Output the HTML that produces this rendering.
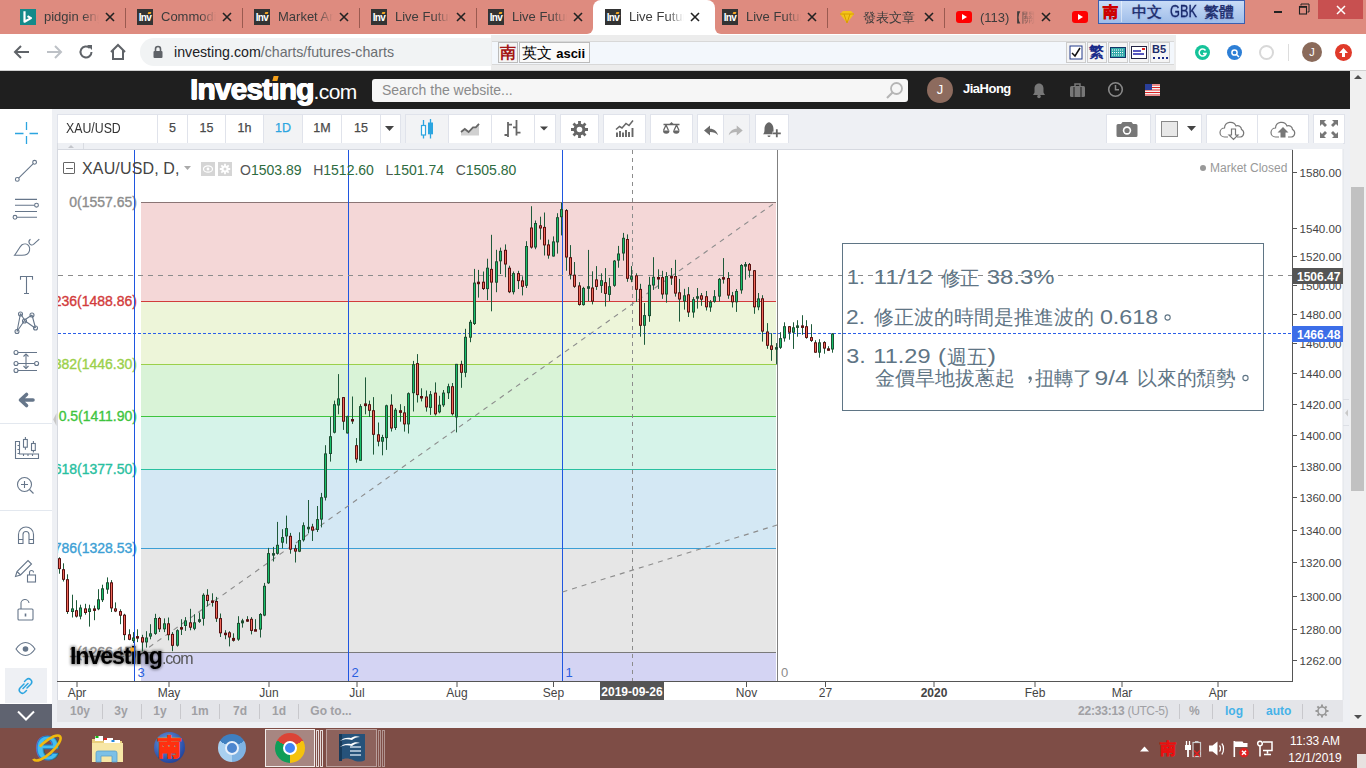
<!DOCTYPE html><html><head><meta charset="utf-8"><style>
*{margin:0;padding:0;box-sizing:border-box}
html,body{width:1366px;height:768px;overflow:hidden;background:#fff;font-family:"Liberation Sans",sans-serif}
.a{position:absolute}
.tab{position:absolute;top:0;height:34px;font-size:12.5px;color:#3c3c3c}
.tabt{position:absolute;top:10px;left:40px;white-space:nowrap;overflow:hidden}
.tx{position:absolute;top:8px;font-size:15px;color:#222}
.sep{position:absolute;top:8px;width:1px;height:20px;background:#9a5a50}
.tb{position:absolute;top:114px;height:30px;background:#fff;border:1px solid #e0e3eb;font-size:12.5px;color:#4a4a4a;text-align:center;line-height:27px;font-weight:normal;-webkit-text-stroke:0.25px currentColor}
svg{position:absolute;overflow:visible}
</style></head><body>

<div class="a" style="left:0;top:0;width:1366px;height:34px;background:#de8b7f"></div>
<div class="a" style="left:587px;top:26px;width:134px;height:8px;background:#fff"></div>
<div class="a" style="left:580px;top:20px;width:13px;height:14px;background:#de8b7f;border-radius:0 0 6px 0"></div>
<div class="a" style="left:715px;top:20px;width:13px;height:14px;background:#de8b7f;border-radius:0 0 0 6px"></div>
<div class="a" style="left:593px;top:0;width:122px;height:34px;background:#fff;border-radius:8px 8px 0 0"></div>
<div class="a" style="left:20px;top:9px;width:16px;height:16px;background:#138a8a"><svg width="16" height="16" style="left:0;top:0"><path d="M4.5 2.2v10.5l6.5-3.6-3.5-2" stroke="#fff" stroke-width="2.2" fill="none" stroke-linejoin="round"/></svg></div>
<div class="tabt a" style="left:44px;top:9px;width:55px;font-size:13px;color:#3c3c3c;-webkit-mask-image:linear-gradient(90deg,#000 70%,transparent)">pidgin eng</div>
<div class="tx" style="left:105px;top:6px"><svg width="10" height="10" style="position:relative;top:2px"><path d="M1 1l8 8M9 1l-8 8" stroke="#222" stroke-width="1.6"/></svg></div>
<div class="sep" style="left:125px"></div>
<div class="a" style="left:137px;top:9px;width:16px;height:16px;background:#333;color:#fff;font-size:10px;font-weight:bold;line-height:18px;text-align:center;letter-spacing:-0.6px;overflow:hidden">Inv<div class="a" style="left:11px;top:3px;width:3px;height:2px;background:#f5a623;transform:skewX(-20deg)"></div></div>
<div class="tabt a" style="left:161px;top:9px;width:55px;font-size:13px;color:#3c3c3c;-webkit-mask-image:linear-gradient(90deg,#000 70%,transparent)">Commodi</div>
<div class="tx" style="left:222px;top:6px"><svg width="10" height="10" style="position:relative;top:2px"><path d="M1 1l8 8M9 1l-8 8" stroke="#222" stroke-width="1.6"/></svg></div>
<div class="sep" style="left:242px"></div>
<div class="a" style="left:254px;top:9px;width:16px;height:16px;background:#333;color:#fff;font-size:10px;font-weight:bold;line-height:18px;text-align:center;letter-spacing:-0.6px;overflow:hidden">Inv<div class="a" style="left:11px;top:3px;width:3px;height:2px;background:#f5a623;transform:skewX(-20deg)"></div></div>
<div class="tabt a" style="left:278px;top:9px;width:55px;font-size:13px;color:#3c3c3c;-webkit-mask-image:linear-gradient(90deg,#000 70%,transparent)">Market An</div>
<div class="tx" style="left:339px;top:6px"><svg width="10" height="10" style="position:relative;top:2px"><path d="M1 1l8 8M9 1l-8 8" stroke="#222" stroke-width="1.6"/></svg></div>
<div class="sep" style="left:359px"></div>
<div class="a" style="left:371px;top:9px;width:16px;height:16px;background:#333;color:#fff;font-size:10px;font-weight:bold;line-height:18px;text-align:center;letter-spacing:-0.6px;overflow:hidden">Inv<div class="a" style="left:11px;top:3px;width:3px;height:2px;background:#f5a623;transform:skewX(-20deg)"></div></div>
<div class="tabt a" style="left:395px;top:9px;width:55px;font-size:13px;color:#3c3c3c;-webkit-mask-image:linear-gradient(90deg,#000 70%,transparent)">Live Futur</div>
<div class="tx" style="left:456px;top:6px"><svg width="10" height="10" style="position:relative;top:2px"><path d="M1 1l8 8M9 1l-8 8" stroke="#222" stroke-width="1.6"/></svg></div>
<div class="sep" style="left:476px"></div>
<div class="a" style="left:488px;top:9px;width:16px;height:16px;background:#333;color:#fff;font-size:10px;font-weight:bold;line-height:18px;text-align:center;letter-spacing:-0.6px;overflow:hidden">Inv<div class="a" style="left:11px;top:3px;width:3px;height:2px;background:#f5a623;transform:skewX(-20deg)"></div></div>
<div class="tabt a" style="left:512px;top:9px;width:55px;font-size:13px;color:#3c3c3c;-webkit-mask-image:linear-gradient(90deg,#000 70%,transparent)">Live Futur</div>
<div class="tx" style="left:573px;top:6px"><svg width="10" height="10" style="position:relative;top:2px"><path d="M1 1l8 8M9 1l-8 8" stroke="#222" stroke-width="1.6"/></svg></div>
<div class="a" style="left:605px;top:9px;width:16px;height:16px;background:#333;color:#fff;font-size:10px;font-weight:bold;line-height:18px;text-align:center;letter-spacing:-0.6px;overflow:hidden">Inv<div class="a" style="left:11px;top:3px;width:3px;height:2px;background:#f5a623;transform:skewX(-20deg)"></div></div>
<div class="tabt a" style="left:629px;top:9px;width:55px;font-size:13px;color:#3c3c3c;-webkit-mask-image:linear-gradient(90deg,#000 70%,transparent)">Live Futur</div>
<div class="tx" style="left:690px;top:6px"><svg width="10" height="10" style="position:relative;top:2px"><path d="M1 1l8 8M9 1l-8 8" stroke="#222" stroke-width="1.6"/></svg></div>
<div class="a" style="left:722px;top:9px;width:16px;height:16px;background:#333;color:#fff;font-size:10px;font-weight:bold;line-height:18px;text-align:center;letter-spacing:-0.6px;overflow:hidden">Inv<div class="a" style="left:11px;top:3px;width:3px;height:2px;background:#f5a623;transform:skewX(-20deg)"></div></div>
<div class="tabt a" style="left:746px;top:9px;width:55px;font-size:13px;color:#3c3c3c;-webkit-mask-image:linear-gradient(90deg,#000 70%,transparent)">Live Futur</div>
<div class="tx" style="left:807px;top:6px"><svg width="10" height="10" style="position:relative;top:2px"><path d="M1 1l8 8M9 1l-8 8" stroke="#222" stroke-width="1.6"/></svg></div>
<div class="sep" style="left:827px"></div>
<svg class="a" style="left:839px;top:9px" width="16" height="16"><path d="M1 5l3-3h8l3 3-7 9z" fill="#f3c41a"/><path d="M1 5h14M5 5l3 9 3-9" stroke="#d89d00" stroke-width="1" fill="none"/></svg>
<div class="tabt a" style="left:863px;top:9px;width:70px;font-size:13px;color:#3c3c3c;-webkit-mask-image:linear-gradient(90deg,#000 70%,transparent)">發表文章</div>
<div class="tx" style="left:924px;top:6px"><svg width="10" height="10" style="position:relative;top:2px"><path d="M1 1l8 8M9 1l-8 8" stroke="#222" stroke-width="1.6"/></svg></div>
<div class="sep" style="left:944px"></div>
<div class="a" style="left:956px;top:11px;width:16px;height:12px;background:#f00;border-radius:3px"><svg width="16" height="12" style="left:0;top:0"><path d="M6 3l5 3-5 3z" fill="#fff"/></svg></div>
<div class="tabt a" style="left:980px;top:9px;width:55px;font-size:13px;color:#3c3c3c;-webkit-mask-image:linear-gradient(90deg,#000 70%,transparent)">(113)【關</div>
<div class="tx" style="left:1041px;top:6px"><svg width="10" height="10" style="position:relative;top:2px"><path d="M1 1l8 8M9 1l-8 8" stroke="#222" stroke-width="1.6"/></svg></div>
<div class="a" style="left:1072px;top:11px;width:16px;height:12px;background:#f00;border-radius:3px"><svg width="16" height="12" style="left:0;top:0"><path d="M6 3l5 3-5 3z" fill="#fff"/></svg></div>
<div class="a" style="left:1098px;top:0;width:147px;height:24px;background:linear-gradient(#c9dcf7,#9fbde9);border:1px solid #3a5fb0"></div>
<div class="a" style="left:1103px;top:3px;width:16px;height:18px;color:#d81010;font-size:15px;font-weight:bold;line-height:18px;-webkit-text-stroke:0.7px #c00">南</div>
<div class="a" style="left:1120.5px;top:1px;width:1px;height:21px;background:rgba(255,255,255,0.5)"></div>
<div class="a" style="left:1132px;top:2px;font-size:15px;color:#1a2a6a;line-height:20px;white-space:nowrap;-webkit-text-stroke:0.4px #1a2a6a;text-shadow:0 1px 2px rgba(60,80,200,0.4)">中文</div>
<div class="a" style="left:1170px;top:2px;font-size:16px;color:#1a2a6a;line-height:20px;white-space:nowrap;-webkit-text-stroke:0.3px #1a2a6a;transform:scaleX(0.8);transform-origin:0 50%;text-shadow:0 1px 2px rgba(60,80,200,0.4)">GBK</div>
<div class="a" style="left:1204px;top:2px;font-size:15px;color:#1a2a6a;line-height:20px;white-space:nowrap;-webkit-text-stroke:0.4px #1a2a6a;text-shadow:0 1px 2px rgba(60,80,200,0.4)">繁體</div>
<div class="a" style="left:1274px;top:11px;width:8px;height:2px;background:#222"></div>
<svg class="a" style="left:1298px;top:3px" width="12" height="12"><path d="M3 2.5V1h8v8H9.5" stroke="#222" stroke-width="1" fill="none"/><rect x="1.5" y="3.5" width="7" height="7.5" stroke="#222" stroke-width="1.1" fill="none"/><path d="M1.5 4h7" stroke="#222" stroke-width="1.6"/></svg>
<div class="a" style="left:1318px;top:0;width:45px;height:19px;background:#c85050"></div>
<svg class="a" style="left:1336px;top:5px" width="10" height="10"><path d="M1 1l8 8M9 1l-8 8" stroke="#fff" stroke-width="1.5"/></svg>
<div class="a" style="left:0;top:34px;width:1366px;height:37px;background:#fff"></div>
<div class="a" style="left:0;top:70px;width:1366px;height:1px;background:#d0d0d0"></div>
<svg class="a" style="left:12px;top:43px" width="20" height="18"><path d="M17 9H3M9 3L3 9l6 6" stroke="#5f6368" stroke-width="2" fill="none"/></svg>
<svg class="a" style="left:44px;top:43px" width="20" height="18"><path d="M3 9h14M11 3l6 6-6 6" stroke="#bdc1c6" stroke-width="2" fill="none"/></svg>
<svg class="a" style="left:77px;top:43px" width="18" height="18"><path d="M14.5 9A5.5 5.5 0 1 1 12.8 5" stroke="#5f6368" stroke-width="2" fill="none"/><path d="M10 2h5v5z" fill="#5f6368"/></svg>
<svg class="a" style="left:108px;top:42px" width="20" height="20"><path d="M3 10L10 3l7 7M5 8v9h10V8" stroke="#5f6368" stroke-width="2" fill="none"/></svg>
<div class="a" style="left:140px;top:38px;width:462px;height:28px;background:#f1f3f4;border-radius:14px"></div>
<svg class="a" style="left:152px;top:45px" width="12" height="14"><rect x="1.5" y="6" width="9" height="7" rx="1" fill="#5f6368"/><path d="M3.5 6V4a2.5 2.5 0 0 1 5 0v2" stroke="#5f6368" stroke-width="1.6" fill="none"/></svg>
<div class="a" style="left:174px;top:44px;font-size:14.2px;color:#202124;white-space:nowrap">investing.com<span style="color:#6b6e72">/charts/futures-charts</span></div>
<div class="a" style="left:491px;top:35px;width:685px;height:35px;background:#ececec"></div>
<div class="a" style="left:492px;top:41px;width:682px;height:24px;background:#f3f7fc;border-top:1px solid #d8d8d8;border-bottom:1px solid #d8d8d8"></div>
<div class="a" style="left:498px;top:42px;width:20px;height:21px;background:#f4f4f4;border:1px solid #bbb;color:#a31515;font-size:16px;font-weight:bold;line-height:19px;text-align:center">南</div>
<div class="a" style="left:519px;top:42px;width:71px;height:21px;background:#fafafa;border:1px solid #bbb;font-size:15px;line-height:19px;color:#000;white-space:nowrap;padding-left:2px">英文 <b style="font-size:13px">ascii</b></div>
<div class="a" style="left:1066px;top:42px;width:20px;height:21px;background:#f4f4f4;border:1px solid #ccc"></div>
<div class="a" style="left:1087px;top:42px;width:20px;height:21px;background:#f4f4f4;border:1px solid #ccc"></div>
<div class="a" style="left:1108px;top:42px;width:20px;height:21px;background:#f4f4f4;border:1px solid #ccc"></div>
<div class="a" style="left:1129px;top:42px;width:20px;height:21px;background:#f4f4f4;border:1px solid #ccc"></div>
<div class="a" style="left:1150px;top:42px;width:20px;height:21px;background:#f4f4f4;border:1px solid #ccc"></div>
<svg class="a" style="left:1069px;top:45px" width="14" height="15"><rect x="1" y="1" width="12" height="13" fill="#fff" stroke="#223a8a"/><path d="M3 8l3 3 5-8" stroke="#111" stroke-width="1.5" fill="none"/></svg>
<div class="a" style="left:1089px;top:43px;font-size:15px;font-weight:bold;color:#1b2b8a;line-height:18px">繁</div>
<svg class="a" style="left:1110px;top:46px" width="16" height="13"><rect x="0.5" y="1.5" width="15" height="10" fill="#3aa" stroke="#136" /><path d="M2 4h12M2 6.5h12M2 9h12" stroke="#fff" stroke-width="1" stroke-dasharray="1 1"/></svg>
<svg class="a" style="left:1131px;top:46px" width="16" height="13"><rect x="0.5" y="0.5" width="15" height="12" fill="#fff" stroke="#224"/><rect x="11" y="2" width="3" height="2" fill="#d22"/><path d="M2 5h8M2 8h11" stroke="#22a" stroke-width="1.5"/></svg>
<div class="a" style="left:1152px;top:42px;font-size:11px;font-weight:bold;color:#1b2b6a;line-height:14px">B5</div>
<div class="a" style="left:1153px;top:57px;width:15px;height:2px;border-top:2px dotted #1b2b8a"></div>
<div class="a" style="left:1195px;top:45px;width:15px;height:15px;border-radius:50%;background:#15c39a"></div>
<svg class="a" style="left:1197px;top:47px" width="11" height="11"><path d="M8.5 3.5A3.5 3.5 0 1 0 9 6.5H6" stroke="#fff" stroke-width="1.6" fill="none"/></svg>
<div class="a" style="left:1227px;top:45px;width:15px;height:15px;border-radius:50%;background:#2d7fd6"></div>
<svg class="a" style="left:1230px;top:48px" width="10" height="10"><circle cx="4.5" cy="4.5" r="2.6" stroke="#fff" stroke-width="1.5" fill="none"/><path d="M6.5 6.5L9 9" stroke="#fff" stroke-width="1.5"/></svg>
<div class="a" style="left:1259px;top:45px;width:15px;height:15px;border-radius:50%;border:2px solid #d8d8d8"></div>
<div class="a" style="left:1288px;top:44px;width:1px;height:17px;background:#ddd"></div>
<div class="a" style="left:1302px;top:42px;width:20px;height:20px;border-radius:50%;background:#8a6a5a;color:#fff;font-size:11px;text-align:center;line-height:20px">J</div>
<div class="a" style="left:1335px;top:44px;width:17px;height:17px;border-radius:50%;background:#e03a2a"></div>
<svg class="a" style="left:1338px;top:47px" width="11" height="11"><path d="M5.5 1L1 6h3v4h3V6h3z" fill="#fff"/></svg>
<div class="a" style="left:0;top:71px;width:1350px;height:38px;background:#1f1f1f"></div>
<div class="a" style="left:190px;top:72px;font-size:30px;font-weight:bold;color:#fff;letter-spacing:-0.9px;white-space:nowrap;line-height:34px;text-shadow:0.6px 0 #fff,-0.6px 0 #fff,0 0.5px #fff">Investing<span style="font-size:21px;font-weight:normal;letter-spacing:-0.6px;text-shadow:none">.com</span></div>
<div class="a" style="left:270px;top:74px;width:10px;height:8px;background:#1f1f1f"></div>
<div class="a" style="left:272.5px;top:76px;width:4.5px;height:5px;background:#f7a21b;transform:skewX(-15deg)"></div>
<div class="a" style="left:372px;top:79px;width:536px;height:23px;background:#f6f6f6;border-radius:3px"></div>
<div class="a" style="left:382px;top:82px;font-size:14px;color:#8a8a8a;white-space:nowrap">Search the website...</div>
<svg class="a" style="left:885px;top:81px" width="20" height="19"><circle cx="11.5" cy="7.5" r="5.5" stroke="#b5b5b5" stroke-width="1.8" fill="none"/><path d="M7.5 11.5L2 17" stroke="#b5b5b5" stroke-width="2.2"/></svg>
<div class="a" style="left:927px;top:77px;width:26px;height:26px;border-radius:50%;background:#8d6b5e;color:#fff;font-size:13px;text-align:center;line-height:26px">J</div>
<div class="a" style="left:963px;top:81px;font-size:13px;font-weight:bold;color:#fff;white-space:nowrap;letter-spacing:-0.5px">JiaHong</div>
<svg class="a" style="left:1031px;top:82px" width="16" height="17"><path d="M8 1.5c-3 0-4.5 2.5-4.5 5v4L2 13h12l-1.5-2.5v-4c0-2.5-1.5-5-4.5-5z" fill="#777"/><circle cx="8" cy="14.5" r="1.8" fill="#777"/></svg>
<svg class="a" style="left:1069px;top:82px" width="17" height="16"><rect x="1" y="4" width="15" height="11" rx="1.5" fill="#777"/><path d="M6 4V2h5v2" stroke="#777" stroke-width="1.5" fill="none"/><path d="M5 5v10M12 5v10" stroke="#1f1f1f" stroke-width="1"/></svg>
<svg class="a" style="left:1107px;top:81px" width="17" height="17"><circle cx="8.5" cy="8.5" r="6.8" stroke="#888" stroke-width="1.6" fill="none"/><path d="M8.5 4v4.8h3.5" stroke="#888" stroke-width="1.5" fill="none"/></svg>
<svg class="a" style="left:1145px;top:84px" width="15" height="12"><rect width="15" height="12" fill="#f4f4f4"/><path d="M0 1h15M0 3.5h15M0 6h15M0 8.5h15M0 11h15" stroke="#d22" stroke-width="1.1"/><rect width="7" height="6" fill="#2a3f9a"/></svg>
<div class="a" style="left:1350px;top:71px;width:16px;height:657px;background:#f0f0f0"></div>
<svg class="a" style="left:1353px;top:73px" width="10" height="8"><path d="M1 6l4-4 4 4z" fill="#505050"/></svg>
<svg class="a" style="left:1353px;top:713px" width="10" height="8"><path d="M1 2l4 4 4-4z" fill="#505050"/></svg>
<div class="a" style="left:1351px;top:187px;width:13px;height:304px;background:#c1c1c1"></div>
<div class="a" style="left:0;top:109px;width:1350px;height:619px;background:#eef0f4"></div>
<svg class="a" style="left:52px;top:412px" width="6" height="15"><path d="M4.5 1L1.2 7.5 4.5 14z" fill="#c8c8c8"/></svg>
<div class="a" style="left:0;top:109px;width:52px;height:595px;background:#fff"></div>
<div class="a" style="left:5px;top:668px;width:42px;height:35px;background:#eef0f4"></div>
<div class="a" style="left:0;top:704px;width:52px;height:24px;background:#5f6370"></div>
<svg class="a" style="left:17px;top:710px" width="18" height="11"><path d="M1 1.5l8 8 8-8" stroke="#fff" stroke-width="2" fill="none"/></svg>
<div class="a" style="left:0;top:423px;width:52px;height:1px;background:#e3e8ef"></div>
<div class="a" style="left:0;top:510px;width:52px;height:1px;background:#e3e8ef"></div>
<svg class="a" style="left:0;top:109px" width="52" height="595" viewBox="0 109 52 595">
<g stroke="#2ca5e0" stroke-width="1.3" fill="none"><path d="M26.5 122v8M26.5 136v8M15 133.5h8.5M29.5 133.5h8.5"/></g>
<g stroke="#66768a" stroke-width="1.1" fill="none">
<path d="M18.6 178.1L33.3 163.6"/><circle cx="17.3" cy="179.4" r="1.9"/><circle cx="34.6" cy="162.3" r="1.9"/>
<path d="M15 199.4h22M15 205.2h19.5M15 211.5h22M17 217.3h20"/><circle cx="36.5" cy="205.2" r="1.9"/><circle cx="15" cy="217.3" r="1.9"/>
<path d="M14.5 255.3c3-3.5 5-8.5 7.5-10.5 2.5-1.5 5.5-1 7 1.5 1.5 2.5 0.5 6.5-2 8-1.5 1-3 1-5 1z"/><path d="M30.5 239.3c-1.5 1-2 2.5-1.2 4 1 1.8 2.8 2.2 4.2 1l5.8-5.2"/>
<path d="M20.5 279.8v-3.3h12v3.3M26.5 276.5v17M24 293.5h5"/>
<path d="M20.5 313.5L17 331.5M20.5 313.5l4 6.5M32 315l-7.5 5M32 315l3.5 13M24.5 320.5l10.5 7.5M24.5 320.5L17 331.5"/>
<circle cx="20.5" cy="314" r="2"/><circle cx="32" cy="315" r="2"/><circle cx="24.5" cy="321" r="2"/><circle cx="17" cy="331.5" r="2"/><circle cx="35.5" cy="328" r="2"/>
<path d="M18 352.5h19M18 363.5h16.6M18 370.5h19M26 354v14.5"/><circle cx="16" cy="352.5" r="2"/><circle cx="16" cy="363.5" r="2"/><circle cx="16" cy="370.5" r="2"/><circle cx="36.6" cy="363.5" r="2"/>
<path d="M23.5 356.5l2.5-2.5 2.5 2.5M23.5 366l2.5 2.5 2.5-2.5"/>
<path d="M15.5 441.5v17h23v-4.5h-19v-12.5z"/><path d="M19.5 445.5h-2M19.5 449.5h-2M19.5 453.5h-2M23.5 454v2M28 454v2M32.5 454v2"/>
<rect x="23.5" y="439.5" width="3.8" height="7.7"/><rect x="31.5" y="443.5" width="3.8" height="7"/><path d="M25.4 437v2.5M25.4 447.2v2.5M33.4 441v2.5M33.4 450.5v2"/>
<circle cx="24.5" cy="484.5" r="7"/><path d="M21 484.5h7M24.5 481v7M29.5 489.5l4 4"/>
<path d="M18.5 543.5v-9a7.5 7.5 0 0 1 15 0v9h-4.5v-9a3 3 0 0 0-6 0v9z"/><path d="M18.5 539.5h4.5M29 539.5h4.5"/>
<path d="M15.5 576.5l1.5-5 11-11 3.5 3.5-11 11z M17 571.5l3.5 3.5"/><rect x="27.5" y="575" width="8" height="7"/><path d="M29.5 575v-2.5a2 2 0 0 1 4 0"/>
<rect x="18" y="609" width="15" height="11" rx="1"/><path d="M21 609v-5a4 4 0 0 1 8 -1"/><path d="M25.5 613.5v3" stroke-width="1.6"/>
<path d="M16 649c3-4.5 6-6.5 9.5-6.5s6.5 2 9.5 6.5c-3 4.5-6 6.5-9.5 6.5s-6.5-2-9.5-6.5z"/>
</g>
<circle cx="25.5" cy="649" r="2.8" fill="#66768a"/>
<path d="M33 400h-11M26.5 394.5l-6 5.5 6 5.5" stroke="#66768a" stroke-width="3.6" fill="none" stroke-linejoin="round" stroke-linecap="round"/>
<g stroke="#2ca5e0" stroke-width="1.5" fill="none" stroke-linecap="round"><path d="M23 688.5l5-5"/><path d="M24.5 681.5l2-2a3.2 3.2 0 0 1 4.5 4.5l-4 4"/><path d="M26.5 690.5l-2 2a3.2 3.2 0 0 1-4.5-4.5l4-4"/></g>
</svg>
<div class="tb" style="left:57px;width:101px;text-align:left;padding-left:8px;font-size:14px;font-weight:normal;color:#333;-webkit-text-stroke:0"><span style="display:inline-block;transform:scaleX(0.88);transform-origin:0 50%">XAU/USD</span></div>
<div class="tb" style="left:157px;width:31px;background:#fff;color:#4a4a4a;">5</div>
<div class="tb" style="left:187px;width:39px;background:#fff;color:#4a4a4a;">15</div>
<div class="tb" style="left:225px;width:39px;background:#fff;color:#4a4a4a;">1h</div>
<div class="tb" style="left:263px;width:40px;background:#f2f3f5;color:#2ca5e0;">1D</div>
<div class="tb" style="left:302px;width:40px;background:#fff;color:#4a4a4a;">1M</div>
<div class="tb" style="left:341px;width:40px;background:#fff;color:#4a4a4a;">15</div>
<div class="tb" style="left:380px;width:21px;background:#fff;color:#4a4a4a;"></div>
<svg class="a" style="left:385px;top:126px" width="10" height="6"><path d="M0 0h9l-4.5 5z" fill="#444"/></svg>
<div class="tb" style="left:405px;width:44px;background:#f2f3f5;color:#444;"></div>
<div class="tb" style="left:448px;width:44px;background:#fff;color:#444;"></div>
<div class="tb" style="left:491px;width:44px;background:#fff;color:#444;"></div>
<div class="tb" style="left:534px;width:22px;background:#fff;color:#444;"></div>
<div class="tb" style="left:560px;width:39px;background:#fff;color:#444;"></div>
<div class="tb" style="left:603px;width:43px;background:#fff;color:#444;"></div>
<div class="tb" style="left:650px;width:43px;background:#fff;color:#444;"></div>
<div class="tb" style="left:697px;width:27px;background:#fff;color:#444;"></div>
<div class="tb" style="left:723px;width:27px;background:#f2f3f5;color:#444;"></div>
<div class="tb" style="left:755px;width:34px;background:#fff;color:#444;"></div>
<div class="tb" style="left:1106px;width:45px;background:#fff;color:#444;"></div>
<div class="tb" style="left:1155px;width:47px;background:#fff;color:#444;"></div>
<div class="tb" style="left:1206px;width:52px;background:#fff;color:#444;"></div>
<div class="tb" style="left:1257px;width:52px;background:#fff;color:#444;"></div>
<div class="tb" style="left:1313px;width:32px;background:#fff;color:#444;"></div>
<svg class="a" style="left:540px;top:126px" width="9" height="6"><path d="M0 0.5h8l-4 4z" fill="#444"/></svg>
<svg class="a" style="left:1187px;top:126px" width="10" height="6"><path d="M0 0h9l-4.5 5z" fill="#444"/></svg>
<svg class="a" style="left:0;top:109px" width="1366" height="40" viewBox="0 109 1366 40">
<path d="M423.5 120v18.5M430.5 119v19.5" stroke="#2ca5e0" stroke-width="1.3"/><rect x="421.5" y="125.5" width="4" height="9.5" fill="#fff" stroke="#2ca5e0" stroke-width="1.2"/><rect x="428" y="122.5" width="5" height="11.8" fill="#2ca5e0"/>
<path d="M461 135.6v-3.6l3.8-3 3.8 3 4.4-4.6 2.8 0 3.2-3.5v11.7z" fill="#d0d0d0"/><path d="M461 132l3.8-3 3.8 3 4.4-4.6h2.8l3.2-3.5" stroke="#666" stroke-width="1.8" fill="none"/>
<path d="M508 122v15M504.5 135h3.5M508 124.6h4M516.5 120v15.5M513 127.3h3.5M516.5 132.7h4" stroke="#666" stroke-width="1.8" fill="none"/>
<g transform="translate(579.5 129.5)"><circle r="6" fill="#666"/><circle r="2.8" fill="#fff"/><g stroke="#666" stroke-width="2.8"><path d="M0 -8.5v3M0 5.5v3M-8.5 0h3M5.5 0h3M-6 -6l2.2 2.2M3.8 3.8l2.2 2.2M-6 6l2.2 -2.2M3.8 -3.8l2.2 -2.2"/></g></g>
<path d="M617 137v-4.5M620 137v-6M623 137v-4.5M626 137v-7M629 137v-5M632.5 137v-9" stroke="#666" stroke-width="1.9" fill="none"/><path d="M616 129.5l3.5-3 2.5 1.5 4-4.5 3 2 4-5" stroke="#666" stroke-width="1.5" fill="none"/>
<g stroke="#666" stroke-width="1.3" fill="none"><path d="M663.5 124.5h16M666 125l-2.5 5.5M666 125l2.5 5.5M676.5 125l-2.5 5.5M676.5 125l2.5 5.5"/></g><path d="M669.5 124l2-2 2 2z" fill="#666"/><path d="M663 130.5h6.5a3.25 3.25 0 0 1-6.5 0zM673 130.5h6.5a3.25 3.25 0 0 1-6.5 0z" fill="#666"/>
<path d="M704 130.5l6-5v3.2c4 0 7 2.5 8 6.5-2-2.2-4.5-3.2-8-3.2v3.5z" fill="#6a6a6a"/>
<path d="M742.7 130.5l-6-5v3.2c-4 0-7 2.5-8 6.5 2-2.2 4.5-3.2 8-3.2v3.5z" fill="#b5b5b5"/>
<path d="M763 134.3c1-1 1.5-2 1.5-5 0-4 2-6.5 4.5-7h0c2.5 0.5 4.5 3 4.5 7v1.5l1 3.5z" fill="#666"/><path d="M767.5 135.5h3a1.5 1.5 0 0 1-3 0z" fill="#666"/><path d="M772.5 133.3h8M776.5 129.3v8" stroke="#fff" stroke-width="3.5"/><path d="M772.8 133.3h8M776.8 129.3v8" stroke="#666" stroke-width="1.8"/>
<path d="M1118 124h3l1.5-2h9l1.5 2h3a1.5 1.5 0 0 1 1.5 1.5v10a1.5 1.5 0 0 1-1.5 1.5h-18a1.5 1.5 0 0 1-1.5-1.5v-10a1.5 1.5 0 0 1 1.5-1.5z" fill="#777"/><circle cx="1127" cy="130.5" r="4.2" fill="#fff"/><circle cx="1127" cy="130.5" r="2.6" fill="#777"/>
<rect x="1161.5" y="121.5" width="16" height="15" fill="#e8e8e8" stroke="#888"/>
<g transform="translate(4 0)"><g fill="none" stroke="#777" stroke-width="1.2"><path d="M1224 137h-3.5a4.5 4.5 0 0 1 0-9 6 6 0 0 1 11.5-2 4 4 0 0 1 5.5 3.5 4 4 0 0 1-1 7.5h-3.5"/><path d="M1227.5 129v6h-2.5l4.5 4.5 4.5-4.5h-2.5v-6z"/></g>
<g fill="none" stroke="#777" stroke-width="1.2"><path d="M1275 137h-3.5a4.5 4.5 0 0 1 0-9 6 6 0 0 1 11.5-2 4 4 0 0 1 5.5 3.5 4 4 0 0 1-1 7.5h-3.5"/></g><path d="M1276.5 137.5v-5h-3l5.5-5.5 5.5 5.5h-3v5z" fill="#777"/></g>
<g fill="#777"><path d="M1320 120l6 0-2 2 3 3-2 2-3-3-2 2zM1338 120v6l-2-2-3 3-2-2 3-3-2-2zM1320 138v-6l2 2 3-3 2 2-3 3 2 2zM1338 138h-6l2-2-3-3 2-2 3 3 2-2z"/></g>
</svg>
<div class="a" style="left:57px;top:143px;width:1286px;height:7px;background:#eef0f4;border-left:1px solid #d9dce2"></div>
<div class="a" style="left:83px;top:143px;width:1px;height:7px;background:#d9dce2"></div>
<svg class="a" style="left:67px;top:144px" width="8" height="5"><path d="M1 4l3-3 3 3z" fill="#c4c6cb"/></svg>
<svg class="a" style="left:57px;top:149px" width="1286" height="551" viewBox="57 149 1286 551">
<rect x="57" y="149" width="1286" height="551" fill="#fff"/>
<path d="M57.5 149v551" stroke="#d6d9e0"/>
<path d="M57 149.5h1236" stroke="#d6d9e0"/>
<path d="M1343 149v551" stroke="#e0e3e8"/>
<clipPath id="pl"><rect x="58" y="150" width="1234" height="531"/></clipPath>
<g clip-path="url(#pl)">
<rect x="141" y="202" width="635" height="99" fill="#f4d7d7"/>
<rect x="141" y="301" width="635" height="63" fill="#edf5d9"/>
<rect x="141" y="364" width="635" height="52" fill="#d9f3d7"/>
<rect x="141" y="416" width="635" height="53" fill="#d6f3e9"/>
<rect x="141" y="469" width="635" height="79" fill="#d4e8f4"/>
<rect x="141" y="548" width="635" height="105" fill="#e6e6e6"/>
<rect x="141" y="653" width="635" height="28" fill="#d4d4f3"/>
<path d="M141 202.5h635" stroke="#8a7575"/>
<path d="M141 301.5h635" stroke="#d23b3b"/>
<path d="M141 364.5h635" stroke="#9bd04a"/>
<path d="M141 416.5h635" stroke="#3ec43e"/>
<path d="M141 469.5h635" stroke="#28c0a0"/>
<path d="M141 548.5h635" stroke="#3c9fd5"/>
<path d="M141 652.5h635" stroke="#7a7a7a"/>
<text x="137" y="207.0" text-anchor="end" font-size="14" fill="#8c8c8c" stroke="#8c8c8c" stroke-width="0.35" font-family="Liberation Sans">0(1557.65)</text>
<text x="137" y="306.0" text-anchor="end" font-size="14" fill="#d23b3b" stroke="#d23b3b" stroke-width="0.35" font-family="Liberation Sans">0.236(1488.86)</text>
<text x="137" y="369.0" text-anchor="end" font-size="14" fill="#9bd04a" stroke="#9bd04a" stroke-width="0.35" font-family="Liberation Sans">0.382(1446.30)</text>
<text x="137" y="421.0" text-anchor="end" font-size="14" fill="#3ec43e" stroke="#3ec43e" stroke-width="0.35" font-family="Liberation Sans">0.5(1411.90)</text>
<text x="137" y="474.0" text-anchor="end" font-size="14" fill="#28c0a0" stroke="#28c0a0" stroke-width="0.35" font-family="Liberation Sans">0.618(1377.50)</text>
<text x="137" y="553.0" text-anchor="end" font-size="14" fill="#3c9fd5" stroke="#3c9fd5" stroke-width="0.35" font-family="Liberation Sans">0.786(1328.53)</text>
<text x="137" y="657.0" text-anchor="end" font-size="14" fill="#8c8c8c" stroke="#8c8c8c" stroke-width="0.35" font-family="Liberation Sans">1(1266.15)</text>
<filter id="wmb" x="-10%" y="-30%" width="120%" height="160%"><feGaussianBlur stdDeviation="1.6"/></filter>
<text x="70" y="664" font-size="23.2" font-weight="bold" fill="#000" fill-opacity="0.35" stroke="#000" stroke-opacity="0.35" stroke-width="2" font-family="Liberation Sans" letter-spacing="-1.1" filter="url(#wmb)">Investing</text>
<text x="70" y="664" font-size="23.2" font-weight="bold" fill="#000" font-family="Liberation Sans" letter-spacing="-1.1" style="filter:blur(0.5px)">Investing<tspan font-size="16" font-weight="normal" fill="#555" letter-spacing="-1">.com</tspan></text>
<rect x="130.5" y="647.5" width="4" height="4" fill="#f5a623"/>
<path d="M134.5 150v531" stroke="#1f56e0" stroke-width="1"/>
<text x="137.5" y="677" font-size="13" fill="#2a5fe0" font-family="Liberation Sans">3</text>
<path d="M348.5 150v531" stroke="#1f56e0" stroke-width="1"/>
<text x="351.5" y="677" font-size="13" fill="#2a5fe0" font-family="Liberation Sans">2</text>
<path d="M562.5 150v531" stroke="#1f56e0" stroke-width="1"/>
<text x="565.5" y="677" font-size="13" fill="#2a5fe0" font-family="Liberation Sans">1</text>
<path d="M777.5 150v531" stroke="#808080"/>
<text x="781" y="677" font-size="13" fill="#8c8c8c" font-family="Liberation Sans">0</text>
<path d="M141 653L776 202" stroke="#8c8c8c" stroke-dasharray="5 5" stroke-width="1.1"/>
<path d="M562.5 592L777 525" stroke="#8c8c8c" stroke-dasharray="5 5" stroke-width="1.1"/>
<path d="M632.5 150v531" stroke="#8c8c8c" stroke-dasharray="4 4"/>
<path d="M58 275.5h1234" stroke="#8c8c8c" stroke-dasharray="5 5"/>
<path d="M58 333.5h1234" stroke="#2b5fe8" stroke-dasharray="3 2"/>
<rect x="59" y="557.3" width="1" height="16.4" fill="#1e5a3a"/>
<rect x="58" y="558.2" width="3" height="10.9" fill="#5a0f0f"/>
<rect x="59" y="559.2" width="1" height="8.9" fill="#f0685a"/>
<rect x="63" y="563.3" width="1" height="18.2" fill="#1e5a3a"/>
<rect x="62" y="569.2" width="3" height="10.6" fill="#5a0f0f"/>
<rect x="63" y="570.2" width="1" height="8.6" fill="#f0685a"/>
<rect x="67" y="574.3" width="1" height="39.6" fill="#1e5a3a"/>
<rect x="66" y="579.2" width="3" height="32.8" fill="#5a0f0f"/>
<rect x="67" y="580.2" width="1" height="30.8" fill="#f0685a"/>
<rect x="72" y="594.7" width="1" height="22.8" fill="#1e5a3a"/>
<rect x="71" y="608.4" width="3" height="3.6" fill="#1f4f33"/>
<rect x="72" y="609.4" width="1" height="1.6" fill="#17c06a"/>
<rect x="76" y="600.2" width="1" height="17.3" fill="#1e5a3a"/>
<rect x="75" y="610.2" width="3" height="6.4" fill="#5a0f0f"/>
<rect x="76" y="611.2" width="1" height="4.4" fill="#f0685a"/>
<rect x="80" y="604.7" width="1" height="14.6" fill="#1e5a3a"/>
<rect x="79" y="607.5" width="3" height="9.1" fill="#1f4f33"/>
<rect x="80" y="608.5" width="1" height="7.1" fill="#17c06a"/>
<rect x="85" y="603.8" width="1" height="10.9" fill="#1e5a3a"/>
<rect x="84" y="608.4" width="3" height="4.6" fill="#5a0f0f"/>
<rect x="85" y="609.4" width="1" height="2.6" fill="#f0685a"/>
<rect x="89" y="604.7" width="1" height="21.9" fill="#1e5a3a"/>
<rect x="88" y="608.4" width="3" height="3.6" fill="#1f4f33"/>
<rect x="89" y="609.4" width="1" height="1.6" fill="#17c06a"/>
<rect x="94" y="605.6" width="1" height="14.6" fill="#1e5a3a"/>
<rect x="93" y="608.4" width="3" height="2.5" fill="#5a0f0f"/>
<rect x="98" y="589.2" width="1" height="21.0" fill="#1e5a3a"/>
<rect x="97" y="599.3" width="3" height="10.0" fill="#1f4f33"/>
<rect x="98" y="600.3" width="1" height="8.0" fill="#17c06a"/>
<rect x="102" y="584.7" width="1" height="17.3" fill="#1e5a3a"/>
<rect x="101" y="588.3" width="3" height="11.9" fill="#1f4f33"/>
<rect x="102" y="589.3" width="1" height="9.9" fill="#17c06a"/>
<rect x="107" y="577.4" width="1" height="16.4" fill="#1e5a3a"/>
<rect x="106" y="582.3" width="3" height="7.3" fill="#1f4f33"/>
<rect x="107" y="583.3" width="1" height="5.3" fill="#17c06a"/>
<rect x="111" y="580.1" width="1" height="31.9" fill="#1e5a3a"/>
<rect x="110" y="582.3" width="3" height="26.1" fill="#5a0f0f"/>
<rect x="111" y="583.3" width="1" height="24.1" fill="#f0685a"/>
<rect x="115" y="602.4" width="1" height="9.7" fill="#1e5a3a"/>
<rect x="114" y="608.4" width="3" height="3.1" fill="#5a0f0f"/>
<rect x="115" y="609.4" width="1" height="1.1" fill="#f0685a"/>
<rect x="120" y="609.3" width="1" height="14.9" fill="#1e5a3a"/>
<rect x="119" y="611.1" width="3" height="4.6" fill="#5a0f0f"/>
<rect x="120" y="612.1" width="1" height="2.6" fill="#f0685a"/>
<rect x="124" y="613.8" width="1" height="26.4" fill="#1e5a3a"/>
<rect x="123" y="614.7" width="3" height="20.4" fill="#5a0f0f"/>
<rect x="124" y="615.7" width="1" height="18.4" fill="#f0685a"/>
<rect x="129" y="629.3" width="1" height="10.9" fill="#1e5a3a"/>
<rect x="128" y="634.3" width="3" height="5.5" fill="#5a0f0f"/>
<rect x="129" y="635.3" width="1" height="3.5" fill="#f0685a"/>
<rect x="133" y="632.1" width="1" height="10.9" fill="#1e5a3a"/>
<rect x="132" y="637.5" width="3" height="3.6" fill="#1f4f33"/>
<rect x="133" y="638.5" width="1" height="1.6" fill="#17c06a"/>
<rect x="137" y="629.3" width="1" height="12.8" fill="#1e5a3a"/>
<rect x="136" y="636.1" width="3" height="2.5" fill="#5a0f0f"/>
<rect x="142" y="634.8" width="1" height="16.4" fill="#1e5a3a"/>
<rect x="141" y="637.2" width="3" height="5.3" fill="#5a0f0f"/>
<rect x="142" y="638.2" width="1" height="3.3" fill="#f0685a"/>
<rect x="146" y="631.2" width="1" height="16.4" fill="#1e5a3a"/>
<rect x="145" y="637.5" width="3" height="4.9" fill="#1f4f33"/>
<rect x="146" y="638.5" width="1" height="2.9" fill="#17c06a"/>
<rect x="150" y="624.2" width="1" height="15.1" fill="#1e5a3a"/>
<rect x="149" y="633.3" width="3" height="3.3" fill="#1f4f33"/>
<rect x="150" y="634.3" width="1" height="1.3" fill="#17c06a"/>
<rect x="155" y="613.8" width="1" height="21.0" fill="#1e5a3a"/>
<rect x="154" y="618.0" width="3" height="15.9" fill="#1f4f33"/>
<rect x="155" y="619.0" width="1" height="13.9" fill="#17c06a"/>
<rect x="159" y="616.9" width="1" height="15.1" fill="#1e5a3a"/>
<rect x="158" y="618.0" width="3" height="11.3" fill="#5a0f0f"/>
<rect x="159" y="619.0" width="1" height="9.3" fill="#f0685a"/>
<rect x="164" y="618.4" width="1" height="13.7" fill="#1e5a3a"/>
<rect x="163" y="623.3" width="3" height="6.0" fill="#1f4f33"/>
<rect x="164" y="624.3" width="1" height="4.0" fill="#17c06a"/>
<rect x="168" y="617.5" width="1" height="22.8" fill="#1e5a3a"/>
<rect x="167" y="623.3" width="3" height="11.9" fill="#5a0f0f"/>
<rect x="168" y="624.3" width="1" height="9.9" fill="#f0685a"/>
<rect x="172" y="632.1" width="1" height="19.1" fill="#1e5a3a"/>
<rect x="171" y="633.9" width="3" height="11.9" fill="#5a0f0f"/>
<rect x="172" y="634.9" width="1" height="9.9" fill="#f0685a"/>
<rect x="177" y="629.3" width="1" height="17.3" fill="#1e5a3a"/>
<rect x="176" y="630.2" width="3" height="15.5" fill="#1f4f33"/>
<rect x="177" y="631.2" width="1" height="13.5" fill="#17c06a"/>
<rect x="181" y="619.2" width="1" height="15.8" fill="#1e5a3a"/>
<rect x="180" y="627.1" width="3" height="2.5" fill="#5a0f0f"/>
<rect x="185" y="617.1" width="1" height="13.8" fill="#1e5a3a"/>
<rect x="184" y="620.4" width="3" height="5.6" fill="#1f4f33"/>
<rect x="185" y="621.4" width="1" height="3.6" fill="#17c06a"/>
<rect x="190" y="608.8" width="1" height="21.5" fill="#1e5a3a"/>
<rect x="189" y="622.3" width="3" height="5.4" fill="#5a0f0f"/>
<rect x="190" y="623.3" width="1" height="3.4" fill="#f0685a"/>
<rect x="194" y="614.2" width="1" height="16.0" fill="#1e5a3a"/>
<rect x="193" y="622.3" width="3" height="6.5" fill="#1f4f33"/>
<rect x="194" y="623.3" width="1" height="4.5" fill="#17c06a"/>
<rect x="199" y="612.5" width="1" height="10.4" fill="#1e5a3a"/>
<rect x="198" y="619.2" width="3" height="2.7" fill="#1f4f33"/>
<rect x="203" y="593.3" width="1" height="32.3" fill="#1e5a3a"/>
<rect x="202" y="594.8" width="3" height="24.0" fill="#1f4f33"/>
<rect x="203" y="595.8" width="1" height="22.0" fill="#17c06a"/>
<rect x="207" y="589.2" width="1" height="17.1" fill="#1e5a3a"/>
<rect x="206" y="594.8" width="3" height="6.2" fill="#5a0f0f"/>
<rect x="207" y="595.8" width="1" height="4.2" fill="#f0685a"/>
<rect x="212" y="593.3" width="1" height="13.3" fill="#1e5a3a"/>
<rect x="211" y="600.4" width="3" height="2.5" fill="#5a0f0f"/>
<rect x="216" y="596.9" width="1" height="25.0" fill="#1e5a3a"/>
<rect x="215" y="601.0" width="3" height="17.7" fill="#5a0f0f"/>
<rect x="216" y="602.0" width="1" height="15.7" fill="#f0685a"/>
<rect x="220" y="613.5" width="1" height="23.5" fill="#1e5a3a"/>
<rect x="219" y="618.1" width="3" height="15.2" fill="#5a0f0f"/>
<rect x="220" y="619.1" width="1" height="13.2" fill="#f0685a"/>
<rect x="225" y="630.2" width="1" height="9.0" fill="#1e5a3a"/>
<rect x="224" y="632.7" width="3" height="2.5" fill="#5a0f0f"/>
<rect x="229" y="631.2" width="1" height="15.2" fill="#1e5a3a"/>
<rect x="228" y="632.3" width="3" height="5.2" fill="#5a0f0f"/>
<rect x="229" y="633.3" width="1" height="3.2" fill="#f0685a"/>
<rect x="233" y="633.3" width="1" height="8.3" fill="#1e5a3a"/>
<rect x="232" y="637.9" width="3" height="2.9" fill="#5a0f0f"/>
<rect x="238" y="616.2" width="1" height="24.6" fill="#1e5a3a"/>
<rect x="237" y="622.9" width="3" height="16.7" fill="#1f4f33"/>
<rect x="238" y="623.9" width="1" height="14.7" fill="#17c06a"/>
<rect x="242" y="618.8" width="1" height="8.8" fill="#1e5a3a"/>
<rect x="241" y="620.4" width="3" height="2.9" fill="#1f4f33"/>
<rect x="247" y="616.2" width="1" height="5.6" fill="#1e5a3a"/>
<rect x="246" y="619.2" width="3" height="2.5" fill="#5a0f0f"/>
<rect x="251" y="617.1" width="1" height="17.3" fill="#1e5a3a"/>
<rect x="250" y="618.8" width="3" height="12.1" fill="#5a0f0f"/>
<rect x="251" y="619.8" width="1" height="10.1" fill="#f0685a"/>
<rect x="255" y="619.2" width="1" height="11.7" fill="#1e5a3a"/>
<rect x="254" y="629.2" width="3" height="2.5" fill="#5a0f0f"/>
<rect x="260" y="613.1" width="1" height="24.4" fill="#1e5a3a"/>
<rect x="259" y="614.0" width="3" height="15.6" fill="#1f4f33"/>
<rect x="260" y="615.0" width="1" height="13.6" fill="#17c06a"/>
<rect x="264" y="582.9" width="1" height="33.3" fill="#1e5a3a"/>
<rect x="263" y="585.8" width="3" height="29.8" fill="#1f4f33"/>
<rect x="264" y="586.8" width="1" height="27.8" fill="#17c06a"/>
<rect x="268" y="547.9" width="1" height="36.0" fill="#1e5a3a"/>
<rect x="267" y="553.1" width="3" height="30.2" fill="#1f4f33"/>
<rect x="268" y="554.1" width="1" height="28.2" fill="#17c06a"/>
<rect x="273" y="546.9" width="1" height="14.6" fill="#1e5a3a"/>
<rect x="272" y="553.1" width="3" height="2.5" fill="#1f4f33"/>
<rect x="277" y="521.9" width="1" height="32.7" fill="#1e5a3a"/>
<rect x="276" y="544.8" width="3" height="9.0" fill="#1f4f33"/>
<rect x="277" y="545.8" width="1" height="7.0" fill="#17c06a"/>
<rect x="282" y="529.2" width="1" height="19.2" fill="#1e5a3a"/>
<rect x="281" y="537.1" width="3" height="5.6" fill="#1f4f33"/>
<rect x="282" y="538.1" width="1" height="3.6" fill="#17c06a"/>
<rect x="286" y="515.6" width="1" height="28.1" fill="#1e5a3a"/>
<rect x="285" y="528.1" width="3" height="8.3" fill="#1f4f33"/>
<rect x="286" y="529.1" width="1" height="6.3" fill="#17c06a"/>
<rect x="290" y="532.9" width="1" height="20.8" fill="#1e5a3a"/>
<rect x="289" y="535.8" width="3" height="13.8" fill="#5a0f0f"/>
<rect x="290" y="536.8" width="1" height="11.8" fill="#f0685a"/>
<rect x="295" y="544.8" width="1" height="17.7" fill="#1e5a3a"/>
<rect x="294" y="548.3" width="3" height="3.3" fill="#5a0f0f"/>
<rect x="295" y="549.3" width="1" height="1.3" fill="#f0685a"/>
<rect x="299" y="532.3" width="1" height="19.8" fill="#1e5a3a"/>
<rect x="298" y="540.0" width="3" height="11.7" fill="#1f4f33"/>
<rect x="299" y="541.0" width="1" height="9.7" fill="#17c06a"/>
<rect x="303" y="522.4" width="1" height="19.2" fill="#1e5a3a"/>
<rect x="302" y="525.2" width="3" height="15.1" fill="#1f4f33"/>
<rect x="303" y="526.2" width="1" height="13.1" fill="#17c06a"/>
<rect x="308" y="500.0" width="1" height="33.4" fill="#1e5a3a"/>
<rect x="307" y="526.8" width="3" height="2.5" fill="#1f4f33"/>
<rect x="312" y="523.8" width="1" height="17.2" fill="#1e5a3a"/>
<rect x="311" y="526.5" width="3" height="4.1" fill="#5a0f0f"/>
<rect x="312" y="527.5" width="1" height="2.1" fill="#f0685a"/>
<rect x="317" y="506.0" width="1" height="26.0" fill="#1e5a3a"/>
<rect x="316" y="519.1" width="3" height="10.9" fill="#1f4f33"/>
<rect x="317" y="520.1" width="1" height="8.9" fill="#17c06a"/>
<rect x="321" y="492.9" width="1" height="34.5" fill="#1e5a3a"/>
<rect x="320" y="497.2" width="3" height="22.4" fill="#1f4f33"/>
<rect x="321" y="498.2" width="1" height="20.4" fill="#17c06a"/>
<rect x="325" y="445.2" width="1" height="55.3" fill="#1e5a3a"/>
<rect x="324" y="453.4" width="3" height="44.3" fill="#1f4f33"/>
<rect x="325" y="454.4" width="1" height="42.3" fill="#17c06a"/>
<rect x="330" y="417.0" width="1" height="44.6" fill="#1e5a3a"/>
<rect x="329" y="436.2" width="3" height="17.8" fill="#1f4f33"/>
<rect x="330" y="437.2" width="1" height="15.8" fill="#17c06a"/>
<rect x="334" y="400.6" width="1" height="32.8" fill="#1e5a3a"/>
<rect x="333" y="404.2" width="3" height="28.5" fill="#1f4f33"/>
<rect x="334" y="405.2" width="1" height="26.5" fill="#17c06a"/>
<rect x="338" y="374.1" width="1" height="40.2" fill="#1e5a3a"/>
<rect x="337" y="398.4" width="3" height="7.1" fill="#1f4f33"/>
<rect x="338" y="399.4" width="1" height="5.1" fill="#17c06a"/>
<rect x="343" y="397.1" width="1" height="32.8" fill="#1e5a3a"/>
<rect x="342" y="397.1" width="3" height="24.6" fill="#5a0f0f"/>
<rect x="343" y="398.1" width="1" height="22.6" fill="#f0685a"/>
<rect x="347" y="415.7" width="1" height="17.8" fill="#1e5a3a"/>
<rect x="346" y="416.2" width="3" height="17.2" fill="#1f4f33"/>
<rect x="347" y="417.2" width="1" height="15.2" fill="#17c06a"/>
<rect x="352" y="396.5" width="1" height="27.4" fill="#1e5a3a"/>
<rect x="351" y="419.0" width="3" height="2.5" fill="#5a0f0f"/>
<rect x="356" y="438.1" width="1" height="24.6" fill="#1e5a3a"/>
<rect x="355" y="445.2" width="3" height="14.2" fill="#5a0f0f"/>
<rect x="356" y="446.2" width="1" height="12.2" fill="#f0685a"/>
<rect x="360" y="404.2" width="1" height="56.7" fill="#1e5a3a"/>
<rect x="359" y="406.1" width="3" height="54.7" fill="#1f4f33"/>
<rect x="360" y="407.1" width="1" height="52.7" fill="#17c06a"/>
<rect x="365" y="377.4" width="1" height="36.9" fill="#1e5a3a"/>
<rect x="364" y="403.4" width="3" height="2.7" fill="#5a0f0f"/>
<rect x="369" y="400.6" width="1" height="16.4" fill="#1e5a3a"/>
<rect x="368" y="404.2" width="3" height="6.6" fill="#5a0f0f"/>
<rect x="369" y="405.2" width="1" height="4.6" fill="#f0685a"/>
<rect x="373" y="397.1" width="1" height="57.5" fill="#1e5a3a"/>
<rect x="372" y="410.2" width="3" height="24.6" fill="#5a0f0f"/>
<rect x="373" y="411.2" width="1" height="22.6" fill="#f0685a"/>
<rect x="378" y="422.5" width="1" height="23.8" fill="#1e5a3a"/>
<rect x="377" y="434.3" width="3" height="7.4" fill="#5a0f0f"/>
<rect x="378" y="435.3" width="1" height="5.4" fill="#f0685a"/>
<rect x="382" y="434.8" width="1" height="20.5" fill="#1e5a3a"/>
<rect x="381" y="437.0" width="3" height="4.7" fill="#1f4f33"/>
<rect x="382" y="438.0" width="1" height="2.7" fill="#17c06a"/>
<rect x="386" y="404.7" width="1" height="45.2" fill="#1e5a3a"/>
<rect x="385" y="405.3" width="3" height="32.8" fill="#1f4f33"/>
<rect x="386" y="406.3" width="1" height="30.8" fill="#17c06a"/>
<rect x="391" y="394.3" width="1" height="37.2" fill="#1e5a3a"/>
<rect x="390" y="404.7" width="3" height="23.8" fill="#5a0f0f"/>
<rect x="391" y="405.7" width="1" height="21.8" fill="#f0685a"/>
<rect x="395" y="408.0" width="1" height="21.9" fill="#1e5a3a"/>
<rect x="394" y="409.7" width="3" height="18.3" fill="#1f4f33"/>
<rect x="395" y="410.7" width="1" height="16.3" fill="#17c06a"/>
<rect x="400" y="404.2" width="1" height="17.5" fill="#1e5a3a"/>
<rect x="399" y="410.2" width="3" height="2.7" fill="#5a0f0f"/>
<rect x="404" y="406.1" width="1" height="25.5" fill="#1e5a3a"/>
<rect x="403" y="412.4" width="3" height="12.0" fill="#5a0f0f"/>
<rect x="404" y="413.4" width="1" height="10.0" fill="#f0685a"/>
<rect x="408" y="392.4" width="1" height="41.1" fill="#1e5a3a"/>
<rect x="407" y="393.2" width="3" height="31.2" fill="#1f4f33"/>
<rect x="408" y="394.2" width="1" height="29.2" fill="#17c06a"/>
<rect x="413" y="360.9" width="1" height="50.6" fill="#1e5a3a"/>
<rect x="412" y="364.2" width="3" height="29.0" fill="#1f4f33"/>
<rect x="413" y="365.2" width="1" height="27.0" fill="#17c06a"/>
<rect x="417" y="354.1" width="1" height="48.4" fill="#1e5a3a"/>
<rect x="416" y="363.1" width="3" height="32.0" fill="#5a0f0f"/>
<rect x="417" y="364.1" width="1" height="30.0" fill="#f0685a"/>
<rect x="421" y="388.3" width="1" height="13.1" fill="#1e5a3a"/>
<rect x="420" y="396.0" width="3" height="2.5" fill="#5a0f0f"/>
<rect x="426" y="390.5" width="1" height="21.1" fill="#1e5a3a"/>
<rect x="425" y="396.5" width="3" height="10.9" fill="#5a0f0f"/>
<rect x="426" y="397.5" width="1" height="8.9" fill="#f0685a"/>
<rect x="430" y="391.0" width="1" height="23.9" fill="#1e5a3a"/>
<rect x="429" y="394.2" width="3" height="13.7" fill="#1f4f33"/>
<rect x="430" y="395.2" width="1" height="11.7" fill="#17c06a"/>
<rect x="435" y="382.4" width="1" height="33.1" fill="#1e5a3a"/>
<rect x="434" y="392.6" width="3" height="21.7" fill="#5a0f0f"/>
<rect x="435" y="393.6" width="1" height="19.7" fill="#f0685a"/>
<rect x="439" y="395.8" width="1" height="17.5" fill="#1e5a3a"/>
<rect x="438" y="404.7" width="3" height="7.6" fill="#1f4f33"/>
<rect x="439" y="405.7" width="1" height="5.6" fill="#17c06a"/>
<rect x="443" y="390.0" width="1" height="16.9" fill="#1e5a3a"/>
<rect x="442" y="392.6" width="3" height="12.7" fill="#1f4f33"/>
<rect x="443" y="393.6" width="1" height="10.7" fill="#17c06a"/>
<rect x="448" y="383.7" width="1" height="15.3" fill="#1e5a3a"/>
<rect x="447" y="386.2" width="3" height="7.0" fill="#1f4f33"/>
<rect x="448" y="387.2" width="1" height="5.0" fill="#17c06a"/>
<rect x="452" y="383.0" width="1" height="32.5" fill="#1e5a3a"/>
<rect x="451" y="386.2" width="3" height="28.0" fill="#5a0f0f"/>
<rect x="452" y="387.2" width="1" height="26.0" fill="#f0685a"/>
<rect x="456" y="363.9" width="1" height="68.5" fill="#1e5a3a"/>
<rect x="455" y="363.9" width="3" height="53.5" fill="#1f4f33"/>
<rect x="456" y="364.9" width="1" height="51.5" fill="#17c06a"/>
<rect x="461" y="360.7" width="1" height="27.1" fill="#1e5a3a"/>
<rect x="460" y="363.9" width="3" height="8.9" fill="#5a0f0f"/>
<rect x="461" y="364.9" width="1" height="6.9" fill="#f0685a"/>
<rect x="465" y="328.8" width="1" height="48.4" fill="#1e5a3a"/>
<rect x="464" y="336.8" width="3" height="36.0" fill="#1f4f33"/>
<rect x="465" y="337.8" width="1" height="34.0" fill="#17c06a"/>
<rect x="470" y="319.9" width="1" height="22.3" fill="#1e5a3a"/>
<rect x="469" y="321.8" width="3" height="15.9" fill="#1f4f33"/>
<rect x="470" y="322.8" width="1" height="13.9" fill="#17c06a"/>
<rect x="474" y="268.9" width="1" height="56.1" fill="#1e5a3a"/>
<rect x="473" y="282.6" width="3" height="41.4" fill="#1f4f33"/>
<rect x="474" y="283.6" width="1" height="39.4" fill="#17c06a"/>
<rect x="478" y="269.9" width="1" height="27.7" fill="#1e5a3a"/>
<rect x="477" y="281.7" width="3" height="2.5" fill="#5a0f0f"/>
<rect x="483" y="271.5" width="1" height="18.5" fill="#1e5a3a"/>
<rect x="482" y="281.7" width="3" height="7.3" fill="#5a0f0f"/>
<rect x="483" y="282.7" width="1" height="5.3" fill="#f0685a"/>
<rect x="487" y="258.7" width="1" height="41.4" fill="#1e5a3a"/>
<rect x="486" y="267.7" width="3" height="21.4" fill="#1f4f33"/>
<rect x="487" y="268.7" width="1" height="19.4" fill="#17c06a"/>
<rect x="491" y="234.8" width="1" height="76.5" fill="#1e5a3a"/>
<rect x="490" y="268.9" width="3" height="13.7" fill="#5a0f0f"/>
<rect x="491" y="269.9" width="1" height="11.7" fill="#f0685a"/>
<rect x="496" y="249.8" width="1" height="42.4" fill="#1e5a3a"/>
<rect x="495" y="261.3" width="3" height="21.4" fill="#1f4f33"/>
<rect x="496" y="262.3" width="1" height="19.4" fill="#17c06a"/>
<rect x="500" y="247.6" width="1" height="26.4" fill="#1e5a3a"/>
<rect x="499" y="250.8" width="3" height="10.5" fill="#1f4f33"/>
<rect x="500" y="251.8" width="1" height="8.5" fill="#17c06a"/>
<rect x="505" y="244.4" width="1" height="32.8" fill="#1e5a3a"/>
<rect x="504" y="249.8" width="3" height="14.7" fill="#5a0f0f"/>
<rect x="505" y="250.8" width="1" height="12.7" fill="#f0685a"/>
<rect x="509" y="265.7" width="1" height="27.4" fill="#1e5a3a"/>
<rect x="508" y="267.7" width="3" height="24.5" fill="#5a0f0f"/>
<rect x="509" y="268.7" width="1" height="22.5" fill="#f0685a"/>
<rect x="513" y="271.5" width="1" height="22.9" fill="#1e5a3a"/>
<rect x="512" y="273.1" width="3" height="19.1" fill="#1f4f33"/>
<rect x="513" y="274.1" width="1" height="17.1" fill="#17c06a"/>
<rect x="518" y="270.8" width="1" height="18.2" fill="#1e5a3a"/>
<rect x="517" y="273.1" width="3" height="8.0" fill="#5a0f0f"/>
<rect x="518" y="274.1" width="1" height="6.0" fill="#f0685a"/>
<rect x="522" y="276.3" width="1" height="19.1" fill="#1e5a3a"/>
<rect x="521" y="280.4" width="3" height="6.4" fill="#5a0f0f"/>
<rect x="522" y="281.4" width="1" height="4.4" fill="#f0685a"/>
<rect x="526" y="241.2" width="1" height="46.8" fill="#1e5a3a"/>
<rect x="525" y="246.0" width="3" height="39.8" fill="#1f4f33"/>
<rect x="526" y="247.0" width="1" height="37.8" fill="#17c06a"/>
<rect x="531" y="206.2" width="1" height="42.4" fill="#1e5a3a"/>
<rect x="530" y="227.5" width="3" height="20.1" fill="#5a0f0f"/>
<rect x="531" y="228.5" width="1" height="18.1" fill="#f0685a"/>
<rect x="535" y="220.5" width="1" height="28.7" fill="#1e5a3a"/>
<rect x="534" y="223.0" width="3" height="24.5" fill="#1f4f33"/>
<rect x="535" y="224.0" width="1" height="22.5" fill="#17c06a"/>
<rect x="540" y="216.7" width="1" height="22.9" fill="#1e5a3a"/>
<rect x="539" y="225.3" width="3" height="3.2" fill="#5a0f0f"/>
<rect x="540" y="226.3" width="1" height="1.2" fill="#f0685a"/>
<rect x="544" y="212.5" width="1" height="43.0" fill="#1e5a3a"/>
<rect x="543" y="226.9" width="3" height="18.5" fill="#5a0f0f"/>
<rect x="544" y="227.9" width="1" height="16.5" fill="#f0685a"/>
<rect x="548" y="239.6" width="1" height="19.1" fill="#1e5a3a"/>
<rect x="547" y="244.4" width="3" height="11.2" fill="#5a0f0f"/>
<rect x="548" y="245.4" width="1" height="9.2" fill="#f0685a"/>
<rect x="553" y="236.4" width="1" height="20.2" fill="#1e5a3a"/>
<rect x="552" y="241.4" width="3" height="15.1" fill="#1f4f33"/>
<rect x="553" y="242.4" width="1" height="13.1" fill="#17c06a"/>
<rect x="557" y="213.2" width="1" height="40.4" fill="#1e5a3a"/>
<rect x="556" y="217.2" width="3" height="25.2" fill="#1f4f33"/>
<rect x="557" y="218.2" width="1" height="23.2" fill="#17c06a"/>
<rect x="561" y="202.7" width="1" height="32.7" fill="#1e5a3a"/>
<rect x="560" y="209.1" width="3" height="8.1" fill="#1f4f33"/>
<rect x="561" y="210.1" width="1" height="6.1" fill="#17c06a"/>
<rect x="566" y="209.1" width="1" height="61.6" fill="#1e5a3a"/>
<rect x="565" y="210.1" width="3" height="47.4" fill="#5a0f0f"/>
<rect x="566" y="211.1" width="1" height="45.4" fill="#f0685a"/>
<rect x="570" y="245.1" width="1" height="34.3" fill="#1e5a3a"/>
<rect x="569" y="257.2" width="3" height="17.6" fill="#5a0f0f"/>
<rect x="570" y="258.2" width="1" height="15.6" fill="#f0685a"/>
<rect x="574" y="262.0" width="1" height="25.8" fill="#1e5a3a"/>
<rect x="573" y="274.7" width="3" height="12.1" fill="#5a0f0f"/>
<rect x="574" y="275.7" width="1" height="10.1" fill="#f0685a"/>
<rect x="579" y="282.2" width="1" height="23.4" fill="#1e5a3a"/>
<rect x="578" y="285.4" width="3" height="19.6" fill="#5a0f0f"/>
<rect x="579" y="286.4" width="1" height="17.6" fill="#f0685a"/>
<rect x="583" y="286.8" width="1" height="18.8" fill="#1e5a3a"/>
<rect x="582" y="287.9" width="3" height="17.2" fill="#1f4f33"/>
<rect x="583" y="288.9" width="1" height="15.2" fill="#17c06a"/>
<rect x="588" y="249.9" width="1" height="51.1" fill="#1e5a3a"/>
<rect x="587" y="286.2" width="3" height="2.6" fill="#1f4f33"/>
<rect x="592" y="271.3" width="1" height="33.1" fill="#1e5a3a"/>
<rect x="591" y="287.5" width="3" height="14.1" fill="#5a0f0f"/>
<rect x="592" y="288.5" width="1" height="12.1" fill="#f0685a"/>
<rect x="596" y="266.1" width="1" height="23.8" fill="#1e5a3a"/>
<rect x="595" y="279.4" width="3" height="7.5" fill="#5a0f0f"/>
<rect x="596" y="280.4" width="1" height="5.5" fill="#f0685a"/>
<rect x="601" y="273.3" width="1" height="19.6" fill="#1e5a3a"/>
<rect x="600" y="280.2" width="3" height="5.7" fill="#1f4f33"/>
<rect x="601" y="281.2" width="1" height="3.7" fill="#17c06a"/>
<rect x="605" y="268.1" width="1" height="38.4" fill="#1e5a3a"/>
<rect x="604" y="282.2" width="3" height="11.7" fill="#5a0f0f"/>
<rect x="605" y="283.2" width="1" height="9.7" fill="#f0685a"/>
<rect x="609" y="277.8" width="1" height="23.2" fill="#1e5a3a"/>
<rect x="608" y="286.2" width="3" height="8.7" fill="#1f4f33"/>
<rect x="609" y="287.2" width="1" height="6.7" fill="#17c06a"/>
<rect x="614" y="260.0" width="1" height="26.8" fill="#1e5a3a"/>
<rect x="613" y="260.6" width="3" height="25.2" fill="#1f4f33"/>
<rect x="614" y="261.6" width="1" height="23.2" fill="#17c06a"/>
<rect x="618" y="245.9" width="1" height="21.8" fill="#1e5a3a"/>
<rect x="617" y="253.5" width="3" height="7.1" fill="#1f4f33"/>
<rect x="618" y="254.5" width="1" height="5.1" fill="#17c06a"/>
<rect x="623" y="232.9" width="1" height="27.7" fill="#1e5a3a"/>
<rect x="622" y="237.8" width="3" height="15.7" fill="#1f4f33"/>
<rect x="623" y="238.8" width="1" height="13.7" fill="#17c06a"/>
<rect x="627" y="234.4" width="1" height="47.4" fill="#1e5a3a"/>
<rect x="626" y="239.0" width="3" height="39.8" fill="#5a0f0f"/>
<rect x="627" y="240.0" width="1" height="37.8" fill="#f0685a"/>
<rect x="631" y="266.1" width="1" height="16.1" fill="#1e5a3a"/>
<rect x="630" y="276.1" width="3" height="3.6" fill="#1f4f33"/>
<rect x="631" y="277.1" width="1" height="1.6" fill="#17c06a"/>
<rect x="636" y="273.3" width="1" height="28.7" fill="#1e5a3a"/>
<rect x="635" y="275.3" width="3" height="14.5" fill="#5a0f0f"/>
<rect x="636" y="276.3" width="1" height="12.5" fill="#f0685a"/>
<rect x="640" y="283.8" width="1" height="52.9" fill="#1e5a3a"/>
<rect x="639" y="288.9" width="3" height="36.9" fill="#5a0f0f"/>
<rect x="640" y="289.9" width="1" height="34.9" fill="#f0685a"/>
<rect x="644" y="303.0" width="1" height="41.8" fill="#1e5a3a"/>
<rect x="643" y="315.1" width="3" height="10.7" fill="#1f4f33"/>
<rect x="644" y="316.1" width="1" height="8.7" fill="#17c06a"/>
<rect x="649" y="276.8" width="1" height="45.0" fill="#1e5a3a"/>
<rect x="648" y="284.8" width="3" height="31.3" fill="#1f4f33"/>
<rect x="649" y="285.8" width="1" height="29.3" fill="#17c06a"/>
<rect x="653" y="257.2" width="1" height="32.7" fill="#1e5a3a"/>
<rect x="652" y="276.8" width="3" height="8.7" fill="#1f4f33"/>
<rect x="653" y="277.8" width="1" height="6.7" fill="#17c06a"/>
<rect x="658" y="269.3" width="1" height="19.6" fill="#1e5a3a"/>
<rect x="657" y="277.0" width="3" height="2.5" fill="#5a0f0f"/>
<rect x="662" y="270.8" width="1" height="28.0" fill="#1e5a3a"/>
<rect x="661" y="277.1" width="3" height="17.4" fill="#5a0f0f"/>
<rect x="662" y="278.1" width="1" height="15.4" fill="#f0685a"/>
<rect x="666" y="272.1" width="1" height="30.6" fill="#1e5a3a"/>
<rect x="665" y="276.0" width="3" height="18.5" fill="#1f4f33"/>
<rect x="666" y="277.0" width="1" height="16.5" fill="#17c06a"/>
<rect x="671" y="268.0" width="1" height="16.9" fill="#1e5a3a"/>
<rect x="670" y="276.0" width="3" height="2.5" fill="#5a0f0f"/>
<rect x="675" y="259.8" width="1" height="36.8" fill="#1e5a3a"/>
<rect x="674" y="276.0" width="3" height="17.6" fill="#5a0f0f"/>
<rect x="675" y="277.0" width="1" height="15.6" fill="#f0685a"/>
<rect x="679" y="278.9" width="1" height="42.7" fill="#1e5a3a"/>
<rect x="678" y="292.3" width="3" height="7.2" fill="#5a0f0f"/>
<rect x="679" y="293.3" width="1" height="5.2" fill="#f0685a"/>
<rect x="684" y="288.8" width="1" height="20.8" fill="#1e5a3a"/>
<rect x="683" y="295.3" width="3" height="6.1" fill="#1f4f33"/>
<rect x="684" y="296.3" width="1" height="4.1" fill="#17c06a"/>
<rect x="688" y="287.1" width="1" height="29.9" fill="#1e5a3a"/>
<rect x="687" y="294.3" width="3" height="18.2" fill="#5a0f0f"/>
<rect x="688" y="295.3" width="1" height="16.2" fill="#f0685a"/>
<rect x="693" y="297.1" width="1" height="20.6" fill="#1e5a3a"/>
<rect x="692" y="299.2" width="3" height="13.3" fill="#1f4f33"/>
<rect x="693" y="300.2" width="1" height="11.3" fill="#17c06a"/>
<rect x="697" y="288.0" width="1" height="20.6" fill="#1e5a3a"/>
<rect x="696" y="296.2" width="3" height="2.5" fill="#1f4f33"/>
<rect x="701" y="293.0" width="1" height="12.8" fill="#1e5a3a"/>
<rect x="700" y="295.3" width="3" height="4.4" fill="#5a0f0f"/>
<rect x="701" y="296.3" width="1" height="2.4" fill="#f0685a"/>
<rect x="706" y="291.0" width="1" height="19.5" fill="#1e5a3a"/>
<rect x="705" y="296.2" width="3" height="11.1" fill="#5a0f0f"/>
<rect x="706" y="297.2" width="1" height="9.1" fill="#f0685a"/>
<rect x="710" y="300.1" width="1" height="11.7" fill="#1e5a3a"/>
<rect x="709" y="301.8" width="3" height="5.7" fill="#1f4f33"/>
<rect x="710" y="302.8" width="1" height="3.7" fill="#17c06a"/>
<rect x="714" y="290.1" width="1" height="12.6" fill="#1e5a3a"/>
<rect x="713" y="296.2" width="3" height="5.6" fill="#1f4f33"/>
<rect x="714" y="297.2" width="1" height="3.6" fill="#17c06a"/>
<rect x="719" y="278.0" width="1" height="23.4" fill="#1e5a3a"/>
<rect x="718" y="278.9" width="3" height="17.7" fill="#1f4f33"/>
<rect x="719" y="279.9" width="1" height="15.7" fill="#17c06a"/>
<rect x="723" y="258.1" width="1" height="25.5" fill="#1e5a3a"/>
<rect x="722" y="277.1" width="3" height="2.5" fill="#5a0f0f"/>
<rect x="728" y="272.1" width="1" height="26.7" fill="#1e5a3a"/>
<rect x="727" y="278.0" width="3" height="17.6" fill="#5a0f0f"/>
<rect x="728" y="279.0" width="1" height="15.6" fill="#f0685a"/>
<rect x="732" y="291.9" width="1" height="15.6" fill="#1e5a3a"/>
<rect x="731" y="295.3" width="3" height="7.0" fill="#5a0f0f"/>
<rect x="732" y="296.3" width="1" height="5.0" fill="#f0685a"/>
<rect x="736" y="289.1" width="1" height="22.8" fill="#1e5a3a"/>
<rect x="735" y="291.0" width="3" height="11.3" fill="#1f4f33"/>
<rect x="736" y="292.0" width="1" height="9.3" fill="#17c06a"/>
<rect x="741" y="264.1" width="1" height="29.6" fill="#1e5a3a"/>
<rect x="740" y="265.0" width="3" height="25.4" fill="#1f4f33"/>
<rect x="741" y="266.0" width="1" height="23.4" fill="#17c06a"/>
<rect x="745" y="262.0" width="1" height="17.7" fill="#1e5a3a"/>
<rect x="744" y="264.1" width="3" height="2.5" fill="#1f4f33"/>
<rect x="749" y="263.0" width="1" height="14.6" fill="#1e5a3a"/>
<rect x="748" y="264.1" width="3" height="6.5" fill="#5a0f0f"/>
<rect x="749" y="265.1" width="1" height="4.5" fill="#f0685a"/>
<rect x="754" y="270.2" width="1" height="43.6" fill="#1e5a3a"/>
<rect x="753" y="270.2" width="3" height="37.1" fill="#5a0f0f"/>
<rect x="754" y="271.2" width="1" height="35.1" fill="#f0685a"/>
<rect x="758" y="293.0" width="1" height="17.2" fill="#1e5a3a"/>
<rect x="757" y="298.4" width="3" height="8.9" fill="#1f4f33"/>
<rect x="758" y="299.4" width="1" height="6.9" fill="#17c06a"/>
<rect x="762" y="295.2" width="1" height="46.4" fill="#1e5a3a"/>
<rect x="761" y="298.3" width="3" height="33.3" fill="#5a0f0f"/>
<rect x="762" y="299.3" width="1" height="31.3" fill="#f0685a"/>
<rect x="767" y="323.1" width="1" height="25.7" fill="#1e5a3a"/>
<rect x="766" y="331.5" width="3" height="14.3" fill="#5a0f0f"/>
<rect x="767" y="332.5" width="1" height="12.3" fill="#f0685a"/>
<rect x="771" y="333.2" width="1" height="27.6" fill="#1e5a3a"/>
<rect x="770" y="345.4" width="3" height="4.5" fill="#5a0f0f"/>
<rect x="771" y="346.4" width="1" height="2.5" fill="#f0685a"/>
<rect x="776" y="343.1" width="1" height="21.4" fill="#1e5a3a"/>
<rect x="775" y="347.1" width="3" height="2.5" fill="#1f4f33"/>
<rect x="780" y="332.2" width="1" height="16.7" fill="#1e5a3a"/>
<rect x="779" y="338.1" width="3" height="9.7" fill="#1f4f33"/>
<rect x="780" y="339.1" width="1" height="7.7" fill="#17c06a"/>
<rect x="784" y="322.3" width="1" height="19.3" fill="#1e5a3a"/>
<rect x="783" y="326.2" width="3" height="12.2" fill="#1f4f33"/>
<rect x="784" y="327.2" width="1" height="10.2" fill="#17c06a"/>
<rect x="789" y="326.2" width="1" height="13.5" fill="#1e5a3a"/>
<rect x="788" y="326.2" width="3" height="6.5" fill="#5a0f0f"/>
<rect x="789" y="327.2" width="1" height="4.5" fill="#f0685a"/>
<rect x="793" y="322.3" width="1" height="26.6" fill="#1e5a3a"/>
<rect x="792" y="327.3" width="3" height="5.4" fill="#1f4f33"/>
<rect x="793" y="328.3" width="1" height="3.4" fill="#17c06a"/>
<rect x="797" y="320.2" width="1" height="16.5" fill="#1e5a3a"/>
<rect x="796" y="325.4" width="3" height="2.5" fill="#1f4f33"/>
<rect x="802" y="315.2" width="1" height="19.6" fill="#1e5a3a"/>
<rect x="801" y="325.4" width="3" height="2.5" fill="#5a0f0f"/>
<rect x="806" y="320.2" width="1" height="18.5" fill="#1e5a3a"/>
<rect x="805" y="326.2" width="3" height="11.7" fill="#5a0f0f"/>
<rect x="806" y="327.2" width="1" height="9.7" fill="#f0685a"/>
<rect x="811" y="324.2" width="1" height="17.7" fill="#1e5a3a"/>
<rect x="810" y="337.1" width="3" height="3.8" fill="#5a0f0f"/>
<rect x="811" y="338.1" width="1" height="1.8" fill="#f0685a"/>
<rect x="815" y="340.2" width="1" height="12.5" fill="#1e5a3a"/>
<rect x="814" y="342.3" width="3" height="10.4" fill="#5a0f0f"/>
<rect x="815" y="343.3" width="1" height="8.4" fill="#f0685a"/>
<rect x="819" y="339.2" width="1" height="18.5" fill="#1e5a3a"/>
<rect x="818" y="342.3" width="3" height="10.4" fill="#1f4f33"/>
<rect x="819" y="343.3" width="1" height="8.4" fill="#17c06a"/>
<rect x="824" y="341.2" width="1" height="12.5" fill="#1e5a3a"/>
<rect x="823" y="342.1" width="3" height="6.5" fill="#5a0f0f"/>
<rect x="824" y="343.1" width="1" height="4.5" fill="#f0685a"/>
<rect x="828" y="346.2" width="1" height="4.4" fill="#1e5a3a"/>
<rect x="827" y="348.3" width="3" height="2.5" fill="#5a0f0f"/>
<rect x="832" y="333.2" width="1" height="19.5" fill="#1e5a3a"/>
<rect x="831" y="333.5" width="3" height="16.0" fill="#1f4f33"/>
<rect x="832" y="334.5" width="1" height="14.0" fill="#17c06a"/>
</g>
<path d="M1292.5 150v531" stroke="#555"/>
<path d="M1293 172.5h4" stroke="#555"/>
<text x="1299.5" y="176.8" font-size="11.6" fill="#444" font-family="Liberation Sans">1580.00</text>
<path d="M1293 228.5h4" stroke="#555"/>
<text x="1299.5" y="232.8" font-size="11.6" fill="#444" font-family="Liberation Sans">1540.00</text>
<path d="M1293 256.5h4" stroke="#555"/>
<text x="1299.5" y="260.8" font-size="11.6" fill="#444" font-family="Liberation Sans">1520.00</text>
<path d="M1293 285.5h4" stroke="#555"/>
<text x="1299.5" y="289.8" font-size="11.6" fill="#444" font-family="Liberation Sans">1500.00</text>
<path d="M1293 314.5h4" stroke="#555"/>
<text x="1299.5" y="318.8" font-size="11.6" fill="#444" font-family="Liberation Sans">1480.00</text>
<path d="M1293 343.5h4" stroke="#555"/>
<text x="1299.5" y="347.8" font-size="11.6" fill="#444" font-family="Liberation Sans">1460.00</text>
<path d="M1293 373.5h4" stroke="#555"/>
<text x="1299.5" y="377.8" font-size="11.6" fill="#444" font-family="Liberation Sans">1440.00</text>
<path d="M1293 404.5h4" stroke="#555"/>
<text x="1299.5" y="408.8" font-size="11.6" fill="#444" font-family="Liberation Sans">1420.00</text>
<path d="M1293 435.5h4" stroke="#555"/>
<text x="1299.5" y="439.8" font-size="11.6" fill="#444" font-family="Liberation Sans">1400.00</text>
<path d="M1293 466.5h4" stroke="#555"/>
<text x="1299.5" y="470.8" font-size="11.6" fill="#444" font-family="Liberation Sans">1380.00</text>
<path d="M1293 497.5h4" stroke="#555"/>
<text x="1299.5" y="501.8" font-size="11.6" fill="#444" font-family="Liberation Sans">1360.00</text>
<path d="M1293 530.5h4" stroke="#555"/>
<text x="1299.5" y="534.8" font-size="11.6" fill="#444" font-family="Liberation Sans">1340.00</text>
<path d="M1293 562.5h4" stroke="#555"/>
<text x="1299.5" y="566.8" font-size="11.6" fill="#444" font-family="Liberation Sans">1320.00</text>
<path d="M1293 596.5h4" stroke="#555"/>
<text x="1299.5" y="600.8" font-size="11.6" fill="#444" font-family="Liberation Sans">1300.00</text>
<path d="M1293 629.5h4" stroke="#555"/>
<text x="1299.5" y="633.8" font-size="11.6" fill="#444" font-family="Liberation Sans">1280.00</text>
<path d="M1293 660.5h4" stroke="#555"/>
<text x="1299.5" y="664.8" font-size="11.6" fill="#444" font-family="Liberation Sans">1262.00</text>
<rect x="1292" y="268" width="51" height="16" fill="#555"/>
<text x="1297" y="280.5" font-size="12" font-weight="bold" fill="#fff" font-family="Liberation Sans">1506.47</text>
<rect x="1292" y="326" width="51" height="16" fill="#3c6ee8"/>
<text x="1297" y="338.5" font-size="12" font-weight="bold" fill="#fff" font-family="Liberation Sans">1466.48</text>
<path d="M57 681.5h1236" stroke="#555"/>
<path d="M77 682v5" stroke="#555"/>
<text x="77" y="697" text-anchor="middle" font-size="12" fill="#444" font-family="Liberation Sans" >Apr</text>
<path d="M169 682v5" stroke="#555"/>
<text x="169" y="697" text-anchor="middle" font-size="12" fill="#444" font-family="Liberation Sans" >May</text>
<path d="M269 682v5" stroke="#555"/>
<text x="269" y="697" text-anchor="middle" font-size="12" fill="#444" font-family="Liberation Sans" >Jun</text>
<path d="M357 682v5" stroke="#555"/>
<text x="357" y="697" text-anchor="middle" font-size="12" fill="#444" font-family="Liberation Sans" >Jul</text>
<path d="M457 682v5" stroke="#555"/>
<text x="457" y="697" text-anchor="middle" font-size="12" fill="#444" font-family="Liberation Sans" >Aug</text>
<path d="M553.5 682v5" stroke="#555"/>
<text x="553.5" y="697" text-anchor="middle" font-size="12" fill="#444" font-family="Liberation Sans" >Sep</text>
<path d="M746.5 682v5" stroke="#555"/>
<text x="746.5" y="697" text-anchor="middle" font-size="12" fill="#444" font-family="Liberation Sans" >Nov</text>
<path d="M825.5 682v5" stroke="#555"/>
<text x="825.5" y="697" text-anchor="middle" font-size="12" fill="#444" font-family="Liberation Sans" >27</text>
<path d="M934 682v5" stroke="#555"/>
<text x="934" y="697" text-anchor="middle" font-size="12" fill="#444" font-family="Liberation Sans" font-weight=bold>2020</text>
<path d="M1035 682v5" stroke="#555"/>
<text x="1035" y="697" text-anchor="middle" font-size="12" fill="#444" font-family="Liberation Sans" >Feb</text>
<path d="M1122 682v5" stroke="#555"/>
<text x="1122" y="697" text-anchor="middle" font-size="12" fill="#444" font-family="Liberation Sans" >Mar</text>
<path d="M1218 682v5" stroke="#555"/>
<text x="1218" y="697" text-anchor="middle" font-size="12" fill="#444" font-family="Liberation Sans" >Apr</text>
<rect x="600" y="682" width="64" height="18" fill="#555"/>
<text x="632" y="696" text-anchor="middle" font-size="12" font-weight="bold" fill="#fff" font-family="Liberation Sans">2019-09-26</text>
</svg>
<div class="a" style="left:63px;top:162px;width:12px;height:12px;border:1px solid #666;border-radius:1px"></div>
<div class="a" style="left:66px;top:168px;width:7px;height:1px;background:#666"></div>
<div class="a" style="left:82px;top:160px;font-size:16px;color:#444;white-space:nowrap;letter-spacing:0.15px">XAU/USD, D,</div>
<svg class="a" style="left:184px;top:166px" width="8" height="5"><path d="M0 0h7l-3.5 4z" fill="#aaa"/></svg>
<div class="a" style="left:201px;top:162px;width:14px;height:14px;background:#d5d5d5"></div>
<div class="a" style="left:218px;top:162px;width:14px;height:14px;background:#d5d5d5"></div>
<svg class="a" style="left:201px;top:162px" width="31" height="14"><ellipse cx="7" cy="7" rx="4.5" ry="3.2" fill="none" stroke="#fff" stroke-width="1.2"/><circle cx="7" cy="7" r="1.4" fill="#fff"/><g transform="translate(24 7)" fill="#fff"><circle r="3.6"/><g stroke="#fff" stroke-width="1.8"><path d="M0 -5.2v10.4M-5.2 0h10.4M-3.7 -3.7l7.4 7.4M-3.7 3.7l7.4 -7.4"/></g><circle r="1.5" fill="#d5d5d5"/></g></svg>
<div class="a" style="left:240px;top:162px;font-size:14px;color:#555;white-space:nowrap;word-spacing:0">O<span style="color:#2e6b40">1503.89</span>&nbsp;&nbsp; H<span style="color:#2e6b40">1512.60</span>&nbsp;&nbsp; L<span style="color:#2e6b40">1501.74</span>&nbsp;&nbsp; C<span style="color:#2e6b40">1505.80</span></div>
<div class="a" style="left:1200px;top:161px;font-size:12px;color:#999;white-space:nowrap"><span style="display:inline-block;width:6px;height:6px;border-radius:50%;background:#999;margin-right:4px;position:relative;top:-1px"></span>Market Closed</div>
<div class="a" style="left:842px;top:243px;width:422px;height:168px;border:1px solid #5f7585"></div>
<svg class="a" style="left:842px;top:243px" width="422" height="168" viewBox="842 243 422 168"><text x="847.0" y="284" font-size="20" fill="#5f7585" font-family="Liberation Sans" textLength="18.0" lengthAdjust="spacingAndGlyphs">1.</text><text x="873.6" y="284" font-size="20" fill="#5f7585" font-family="Liberation Sans" textLength="59.19999999999993" lengthAdjust="spacingAndGlyphs">11/12</text><text x="940.9" y="284.8" font-size="20" fill="#5f7585" font-family="Liberation Sans" textLength="38.89999999999998" lengthAdjust="spacingAndGlyphs">修正</text><text x="986.8" y="284" font-size="20" fill="#5f7585" font-family="Liberation Sans" textLength="67.60000000000014" lengthAdjust="spacingAndGlyphs">38.3%</text><text x="846.0" y="323.5" font-size="20" fill="#5f7585" font-family="Liberation Sans" textLength="19.0" lengthAdjust="spacingAndGlyphs">2.</text><text x="874.1" y="324.3" font-size="20" fill="#5f7585" font-family="Liberation Sans" textLength="219.39999999999998" lengthAdjust="spacingAndGlyphs">修正波的時間是推進波的</text><text x="1099.9" y="323.5" font-size="20" fill="#5f7585" font-family="Liberation Sans" textLength="58.299999999999955" lengthAdjust="spacingAndGlyphs">0.618</text><text x="846.2" y="363.3" font-size="20" fill="#5f7585" font-family="Liberation Sans" textLength="19.5" lengthAdjust="spacingAndGlyphs">3.</text><text x="873.3" y="363.3" font-size="20" fill="#5f7585" font-family="Liberation Sans" textLength="57.200000000000045" lengthAdjust="spacingAndGlyphs">11.29</text><text x="938.0" y="363.3" font-size="20" fill="#5f7585" font-family="Liberation Sans" textLength="8.0" lengthAdjust="spacingAndGlyphs">(</text><text x="947.0" y="364.1" font-size="20" fill="#5f7585" font-family="Liberation Sans" textLength="40.10000000000002" lengthAdjust="spacingAndGlyphs">週五</text><text x="987.5" y="363.3" font-size="20" fill="#5f7585" font-family="Liberation Sans" textLength="8.5" lengthAdjust="spacingAndGlyphs">)</text><text x="874.7" y="385.3" font-size="20" fill="#5f7585" font-family="Liberation Sans" textLength="139.79999999999995" lengthAdjust="spacingAndGlyphs">金價旱地拔蔥起</text><text x="1034.5" y="385.3" font-size="20" fill="#5f7585" font-family="Liberation Sans" textLength="58.0" lengthAdjust="spacingAndGlyphs">扭轉了</text><text x="1094.6" y="384.5" font-size="20" fill="#5f7585" font-family="Liberation Sans" textLength="34.200000000000045" lengthAdjust="spacingAndGlyphs">9/4</text><text x="1136.9" y="385.3" font-size="20" fill="#5f7585" font-family="Liberation Sans" textLength="99.19999999999982" lengthAdjust="spacingAndGlyphs">以來的頹勢</text><circle cx="1167.6" cy="317.5" r="2.6" fill="none" stroke="#5f7585" stroke-width="1.1"/><circle cx="1245.5" cy="378" r="2.6" fill="none" stroke="#5f7585" stroke-width="1.1"/><circle cx="1030" cy="378" r="1.7" fill="#5f7585"/><path d="M1031.4 378.3c-0.2 1.8-1 3.4-2.4 4.6" stroke="#5f7585" stroke-width="1.2" fill="none"/></svg>
<div class="a" style="left:1343px;top:399px;width:6px;height:27px;border-top:1px solid #dcdfe5;border-bottom:1px solid #dcdfe5"></div>
<svg class="a" style="left:1344px;top:409px" width="5" height="8"><path d="M4 0.5L1 4 4 7.5z" fill="#c8c8c8"/></svg>
<div class="a" style="left:57px;top:700px;width:1286px;height:22px;background:#e4e5e9"></div>
<div class="a" style="left:50px;width:60px;top:704px;text-align:center;font-size:12px;font-weight:bold;color:#a0a0a4">10y</div>
<div class="a" style="left:91px;width:60px;top:704px;text-align:center;font-size:12px;font-weight:bold;color:#a0a0a4">3y</div>
<div class="a" style="left:130px;width:60px;top:704px;text-align:center;font-size:12px;font-weight:bold;color:#a0a0a4">1y</div>
<div class="a" style="left:170px;width:60px;top:704px;text-align:center;font-size:12px;font-weight:bold;color:#a0a0a4">1m</div>
<div class="a" style="left:210px;width:60px;top:704px;text-align:center;font-size:12px;font-weight:bold;color:#a0a0a4">7d</div>
<div class="a" style="left:249px;width:60px;top:704px;text-align:center;font-size:12px;font-weight:bold;color:#a0a0a4">1d</div>
<div class="a" style="left:301px;width:60px;top:704px;text-align:center;font-size:12px;font-weight:bold;color:#a0a0a4">Go to...</div>
<div class="a" style="left:102px;top:704px;width:1px;height:15px;background:#c8c8cc"></div>
<div class="a" style="left:141px;top:704px;width:1px;height:15px;background:#c8c8cc"></div>
<div class="a" style="left:180px;top:704px;width:1px;height:15px;background:#c8c8cc"></div>
<div class="a" style="left:219px;top:704px;width:1px;height:15px;background:#c8c8cc"></div>
<div class="a" style="left:259px;top:704px;width:1px;height:15px;background:#c8c8cc"></div>
<div class="a" style="left:298px;top:704px;width:1px;height:15px;background:#c8c8cc"></div>
<div class="a" style="left:1078px;top:704px;font-size:12px;font-weight:bold;color:#a0a0a4;white-space:nowrap;letter-spacing:-0.2px">22:33:13 <span style="font-weight:normal;letter-spacing:-0.4px">(UTC-5)</span></div>
<div class="a" style="left:1189px;top:704px;font-size:12px;font-weight:bold;color:#a0a0a4">%</div>
<div class="a" style="left:1225px;top:704px;font-size:12px;font-weight:bold;color:#46b2e8">log</div>
<div class="a" style="left:1266px;top:704px;font-size:12px;font-weight:bold;color:#46b2e8">auto</div>
<div class="a" style="left:1179px;top:704px;width:1px;height:15px;background:#c8c8cc"></div>
<div class="a" style="left:1212px;top:704px;width:1px;height:15px;background:#c8c8cc"></div>
<div class="a" style="left:1253px;top:704px;width:1px;height:15px;background:#c8c8cc"></div>
<div class="a" style="left:1302px;top:704px;width:1px;height:15px;background:#c8c8cc"></div>
<svg class="a" style="left:1315px;top:704px" width="14" height="14"><g transform="translate(7 7)"><circle r="4" fill="none" stroke="#999" stroke-width="1.6"/><g stroke="#999" stroke-width="2"><path d="M0 -6.5v2.5M0 4v2.5M-6.5 0h2.5M4 0h2.5M-4.6 -4.6l1.8 1.8M2.8 2.8l1.8 1.8M-4.6 4.6l1.8 -1.8M2.8 -2.8l1.8 -1.8"/></g></g></svg>
<div class="a" style="left:0;top:728px;width:1366px;height:40px;background:#7e4d46"></div>
<div class="a" style="left:265px;top:729px;width:50px;height:38px;background:rgba(255,255,255,0.32);border:1.5px solid rgba(255,255,255,0.85)"></div>
<div class="a" style="left:316px;top:730px;width:3px;height:37px;border:1px solid rgba(255,255,255,0.8)"></div>
<div class="a" style="left:320px;top:730px;width:3px;height:37px;border:1px solid rgba(255,255,255,0.8)"></div>
<div class="a" style="left:326px;top:729px;width:51px;height:38px;background:rgba(255,255,255,0.12);border:1px solid rgba(255,255,255,0.4)"></div>
<div class="a" style="left:378px;top:730px;width:3px;height:37px;border:1px solid rgba(255,255,255,0.4)"></div>
<div class="a" style="left:382px;top:730px;width:3px;height:37px;border:1px solid rgba(255,255,255,0.4)"></div>
<svg class="a" style="left:28px;top:730px" width="36" height="36"><text x="19.5" y="29.5" text-anchor="middle" font-size="44" font-weight="bold" fill="#45bdf0" stroke="#1c7fc4" stroke-width="1" font-family="Liberation Sans">e</text><ellipse cx="19" cy="18" rx="17.5" ry="6" transform="rotate(-42 19 18)" fill="none" stroke="#f0b90f" stroke-width="2.6" stroke-dasharray="40 14 100" stroke-dashoffset="0"/></svg>
<svg class="a" style="left:91px;top:734px" width="34" height="31"><path d="M1 5h10l2 2h18v20H1z" fill="#e9cf7c"/><rect x="4" y="2" width="8" height="5" fill="#fff"/><rect x="4.5" y="2" width="3" height="2" fill="#1b1"/><rect x="13" y="4" width="9" height="5" fill="#fff"/><rect x="13" y="4" width="3" height="2" fill="#d22"/><rect x="20" y="6" width="9" height="5" fill="#fff"/><rect x="20.5" y="6" width="3" height="2" fill="#28d"/><path d="M1 9h31v19H1z" fill="#f7e7a6"/><path d="M5 28v-9a2 2 0 0 1 2-2h17a2 2 0 0 1 2 2v9h-5v-6h-11v6z" fill="#7cc0e6" stroke="#5aa0c8" stroke-width="0.8"/></svg>
<div class="a" style="left:154px;top:732px;width:31px;height:31px;border-radius:50%;background:radial-gradient(circle at 40% 35%,#6c9ee6,#2a4fa8 65%,#1a2f70);"></div>
<div class="a" style="left:153px;top:731px;width:33px;height:33px;color:#ff2a10;font-size:23px;font-weight:bold;text-align:center;line-height:33px;-webkit-text-stroke:1.2px #ff3010;text-shadow:0 -1px 1px #ffb000">南</div>
<div class="a" style="left:218px;top:734px;width:28px;height:28px;border-radius:50%;background:conic-gradient(from -60deg,#3f7fc0 0 120deg,#7fb3e3 120deg 240deg,#a9d0f0 240deg 360deg)"></div>
<div class="a" style="left:225px;top:741px;width:14px;height:14px;border-radius:50%;background:#4d86cf;border:2px solid #e8f0fa"></div>
<div class="a" style="left:275px;top:733px;width:30px;height:30px;border-radius:50%;background:conic-gradient(from -60deg,#db4437 0 120deg,#f4c20d 120deg 240deg,#0f9d58 240deg 360deg)"></div>
<div class="a" style="left:283px;top:741px;width:14px;height:14px;border-radius:50%;background:#4285f4;border:2px solid #fff"></div>
<svg class="a" style="left:336px;top:732px" width="32" height="31"><path d="M3 2h26v26c-3 2-8 2-12 0-4-2-9-2-12 0H3z" fill="#26527a"/><path d="M3 2h3v27H3z" fill="#173a5a"/><path d="M14 19h11M14 23h11M14 15h11" stroke="#c8d8e8" stroke-width="1.6"/><path d="M4 9c3-3 7-4 11-3 3-2 6-2 9-1-3 0-6 1-8 3-4-1-8-1-12 1zM4 15c3-3 7-4 11-3 3-2 6-2 9-1-3 0-6 1-8 3-4-1-8-1-12 1z" fill="#fff"/></svg>
<svg class="a" style="left:1139px;top:745px" width="11" height="8"><path d="M1 6.5l4.5-5 4.5 5z" fill="#fff"/></svg>
<div class="a" style="left:1160px;top:739px;font-size:16px;font-weight:bold;color:#e81010;line-height:20px;-webkit-text-stroke:0.6px #e81010">南</div>
<svg class="a" style="left:1184px;top:740px" width="18" height="18"><path d="M2.5 1v4M5.5 1v4" stroke="#fff" stroke-width="1.3"/><rect x="1" y="5" width="6" height="5" fill="#fff"/><path d="M4 10v7" stroke="#fff" stroke-width="1.8"/><rect x="9" y="2.5" width="7.5" height="14" fill="#6b3a34" stroke="#ccc" stroke-width="1.2"/><rect x="11" y="1" width="3.5" height="1.5" fill="#ccc"/><path d="M10 10.5l6 6M16 10.5l-6 6" stroke="#e02020" stroke-width="1.6"/></svg>
<svg class="a" style="left:1208px;top:741px" width="17" height="15"><path d="M1 4.5h3.5l5-4v14l-5-4H1z" fill="#fff"/><path d="M11.5 4.5c1.3 1.5 1.3 4.5 0 6M13.8 2.5c2.3 2.5 2.3 8.5 0 11" stroke="#fff" stroke-width="1.2" fill="none"/></svg>
<svg class="a" style="left:1232px;top:740px" width="18" height="18"><path d="M2.3 1v16" stroke="#fff" stroke-width="1.6"/><path d="M3 1.5h7.5l1 1.5h4v4h-12.5z" fill="#fff"/><circle cx="12" cy="12.7" r="4.8" fill="#e02020"/><path d="M10 10.7l4 4M14 10.7l-4 4" stroke="#fff" stroke-width="1.5"/></svg>
<svg class="a" style="left:1256px;top:740px" width="18" height="18"><circle cx="4" cy="3.5" r="2.3" fill="none" stroke="#fff" stroke-width="1.5"/><path d="M4 6v10.5" stroke="#fff" stroke-width="1.6"/><path d="M7 2h9v8.5H7" fill="none" stroke="#fff" stroke-width="1.5"/><path d="M11.5 10.5v3M8 14.5h7" stroke="#fff" stroke-width="1.5"/></svg>
<div class="a" style="left:1280px;top:733px;width:70px;font-size:12px;color:#fff;text-align:center;line-height:17px">11:33 AM<br>12/1/2019</div>
<div class="a" style="left:1357px;top:754px;width:9px;height:14px;background:#e8e2e0"></div>
</body></html>
